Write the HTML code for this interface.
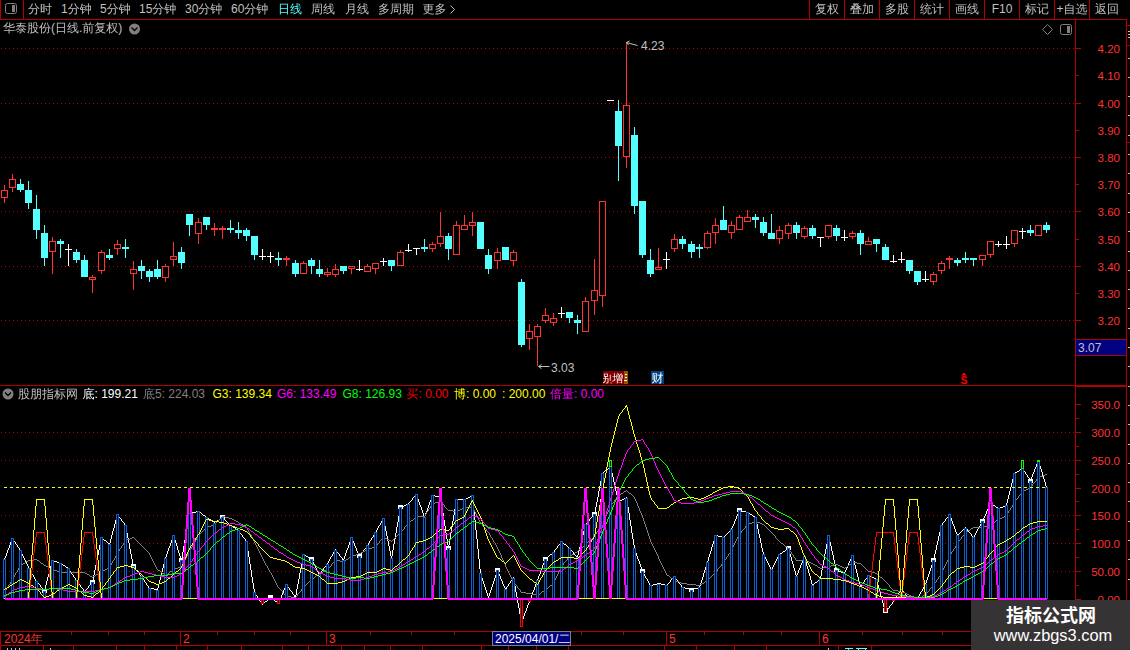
<!DOCTYPE html>
<html lang="zh-CN"><head><meta charset="utf-8"><title>华泰股份 日线</title>
<style>
html,body{margin:0;padding:0;background:#000;overflow:hidden}
svg{display:block}
text{font-family:"Liberation Sans","WenQuanYi Zen Hei","Noto Sans CJK SC",sans-serif;white-space:pre}
</style></head><body>
<svg width="1130" height="650" viewBox="0 0 1130 650">
<rect x="0" y="0" width="1130" height="650" fill="#000"/>
<g shape-rendering="crispEdges">
<line x1="1" y1="48.5" x2="1074" y2="48.5" stroke="#B40000" stroke-width="1" stroke-dasharray="1 3"/>
<line x1="1" y1="103.5" x2="1074" y2="103.5" stroke="#B40000" stroke-width="1" stroke-dasharray="1 3"/>
<line x1="1" y1="157.5" x2="1074" y2="157.5" stroke="#B40000" stroke-width="1" stroke-dasharray="1 3"/>
<line x1="1" y1="211.5" x2="1074" y2="211.5" stroke="#B40000" stroke-width="1" stroke-dasharray="1 3"/>
<line x1="1" y1="266.5" x2="1074" y2="266.5" stroke="#B40000" stroke-width="1" stroke-dasharray="1 3"/>
<line x1="1" y1="320.5" x2="1074" y2="320.5" stroke="#B40000" stroke-width="1" stroke-dasharray="1 3"/>
<line x1="1" y1="432.5" x2="1074" y2="432.5" stroke="#B40000" stroke-width="1" stroke-dasharray="1 3"/>
<line x1="1" y1="460.5" x2="1074" y2="460.5" stroke="#B40000" stroke-width="1" stroke-dasharray="1 3"/>
<line x1="1" y1="515.5" x2="1074" y2="515.5" stroke="#B40000" stroke-width="1" stroke-dasharray="1 3"/>
<line x1="1" y1="543.5" x2="1074" y2="543.5" stroke="#B40000" stroke-width="1" stroke-dasharray="1 3"/>
<line x1="1" y1="571.5" x2="1074" y2="571.5" stroke="#B40000" stroke-width="1" stroke-dasharray="1 3"/>
<rect x="0" y="19" width="1127" height="1" fill="#B40000" />
<rect x="0" y="0" width="1" height="20" fill="#B40000" />
<rect x="23" y="0" width="1" height="20" fill="#B40000" />
<rect x="809" y="0" width="1" height="20" fill="#B40000" />
<rect x="844" y="0" width="1" height="20" fill="#B40000" />
<rect x="879" y="0" width="1" height="20" fill="#B40000" />
<rect x="914" y="0" width="1" height="20" fill="#B40000" />
<rect x="949" y="0" width="1" height="20" fill="#B40000" />
<rect x="984" y="0" width="1" height="20" fill="#B40000" />
<rect x="1019" y="0" width="1" height="20" fill="#B40000" />
<rect x="1054" y="0" width="1" height="20" fill="#B40000" />
<rect x="1089" y="0" width="1" height="20" fill="#B40000" />
<rect x="1075" y="20" width="1" height="611" fill="#B40000" />
<rect x="1126" y="20" width="1" height="581" fill="#B40000" />
<rect x="0" y="385" width="1076" height="1" fill="#B40000" />
<rect x="1075" y="385" width="52" height="2" fill="#B40000" />
<rect x="1076" y="48" width="5" height="1" fill="#B40000" />
<rect x="1076" y="75" width="3" height="1" fill="#B40000" />
<rect x="1076" y="103" width="5" height="1" fill="#B40000" />
<rect x="1076" y="130" width="3" height="1" fill="#B40000" />
<rect x="1076" y="157" width="5" height="1" fill="#B40000" />
<rect x="1076" y="184" width="3" height="1" fill="#B40000" />
<rect x="1076" y="211" width="5" height="1" fill="#B40000" />
<rect x="1076" y="239" width="3" height="1" fill="#B40000" />
<rect x="1076" y="266" width="5" height="1" fill="#B40000" />
<rect x="1076" y="293" width="3" height="1" fill="#B40000" />
<rect x="1076" y="320" width="5" height="1" fill="#B40000" />
<rect x="1076" y="599" width="5" height="1" fill="#B40000" />
<rect x="1076" y="585" width="3" height="1" fill="#B40000" />
<rect x="1076" y="571" width="5" height="1" fill="#B40000" />
<rect x="1076" y="557" width="3" height="1" fill="#B40000" />
<rect x="1076" y="543" width="5" height="1" fill="#B40000" />
<rect x="1076" y="529" width="3" height="1" fill="#B40000" />
<rect x="1076" y="515" width="5" height="1" fill="#B40000" />
<rect x="1076" y="501" width="3" height="1" fill="#B40000" />
<rect x="1076" y="488" width="5" height="1" fill="#B40000" />
<rect x="1076" y="474" width="3" height="1" fill="#B40000" />
<rect x="1076" y="460" width="5" height="1" fill="#B40000" />
<rect x="1076" y="446" width="3" height="1" fill="#B40000" />
<rect x="1076" y="432" width="5" height="1" fill="#B40000" />
<rect x="1076" y="418" width="3" height="1" fill="#B40000" />
<rect x="1076" y="404" width="5" height="1" fill="#B40000" />
<rect x="1128" y="58" width="2" height="1" fill="#C0C0C0" />
<rect x="1128" y="77" width="2" height="1" fill="#C0C0C0" />
<rect x="1128" y="96" width="2" height="1" fill="#C0C0C0" />
<rect x="1128" y="115" width="2" height="1" fill="#C0C0C0" />
<rect x="1128" y="135" width="2" height="1" fill="#C0C0C0" />
<rect x="1128" y="154" width="2" height="1" fill="#C0C0C0" />
<rect x="1128" y="173" width="2" height="1" fill="#C0C0C0" />
<rect x="1128" y="193" width="2" height="1" fill="#C0C0C0" />
<rect x="1128" y="212" width="2" height="1" fill="#C0C0C0" />
<rect x="1128" y="231" width="2" height="1" fill="#C0C0C0" />
<rect x="1128" y="251" width="2" height="1" fill="#C0C0C0" />
<rect x="1128" y="270" width="2" height="1" fill="#C0C0C0" />
<rect x="1128" y="289" width="2" height="1" fill="#C0C0C0" />
<rect x="1128" y="308" width="2" height="1" fill="#C0C0C0" />
<rect x="1128" y="328" width="2" height="1" fill="#C0C0C0" />
<rect x="1128" y="347" width="2" height="1" fill="#C0C0C0" />
<rect x="1128" y="366" width="2" height="1" fill="#C0C0C0" />
<rect x="1128" y="386" width="2" height="1" fill="#C0C0C0" />
<rect x="1128" y="405" width="2" height="1" fill="#C0C0C0" />
<rect x="1128" y="424" width="2" height="1" fill="#C0C0C0" />
<rect x="1128" y="444" width="2" height="1" fill="#C0C0C0" />
<rect x="1128" y="463" width="2" height="1" fill="#C0C0C0" />
<rect x="1128" y="482" width="2" height="1" fill="#C0C0C0" />
<rect x="1128" y="501" width="2" height="1" fill="#C0C0C0" />
<rect x="1128" y="521" width="2" height="1" fill="#C0C0C0" />
<rect x="1128" y="540" width="2" height="1" fill="#C0C0C0" />
<rect x="1128" y="559" width="2" height="1" fill="#C0C0C0" />
<rect x="1128" y="579" width="2" height="1" fill="#C0C0C0" />
<rect x="1127" y="25" width="3" height="1" fill="#B40000" />
<rect x="1127" y="45" width="3" height="1" fill="#B40000" />
<rect x="1127" y="142" width="3" height="1" fill="#B40000" />
<rect x="1128" y="31" width="2" height="1" fill="#C0C0C0" />
<rect x="1128" y="34" width="2" height="1" fill="#C0C0C0" />
<rect x="1128" y="37" width="2" height="1" fill="#C0C0C0" />
<rect x="1076" y="340" width="50" height="15" fill="#000080" />
<rect x="1076" y="339" width="51" height="1" fill="#B40000" />
<rect x="1076" y="355" width="51" height="1" fill="#B40000" />
<rect x="0" y="631" width="1076" height="1" fill="#B40000" />
<rect x="0" y="645" width="971" height="1" fill="#B40000" />
<rect x="0" y="631" width="1" height="20" fill="#B40000" />
<rect x="180" y="631" width="1" height="15" fill="#B40000" />
<rect x="326" y="631" width="1" height="15" fill="#B40000" />
<rect x="492" y="631" width="1" height="15" fill="#B40000" />
<rect x="666" y="631" width="1" height="15" fill="#B40000" />
<rect x="819" y="631" width="1" height="15" fill="#B40000" />
<rect x="71" y="632" width="1" height="3" fill="#B40000" />
<rect x="108" y="632" width="1" height="3" fill="#B40000" />
<rect x="144" y="632" width="1" height="3" fill="#B40000" />
<rect x="217" y="632" width="1" height="3" fill="#B40000" />
<rect x="254" y="632" width="1" height="3" fill="#B40000" />
<rect x="290" y="632" width="1" height="3" fill="#B40000" />
<rect x="370" y="632" width="1" height="3" fill="#B40000" />
<rect x="411" y="632" width="1" height="3" fill="#B40000" />
<rect x="454" y="632" width="1" height="3" fill="#B40000" />
<rect x="581" y="632" width="1" height="3" fill="#B40000" />
<rect x="623" y="632" width="1" height="3" fill="#B40000" />
<rect x="704" y="632" width="1" height="3" fill="#B40000" />
<rect x="743" y="632" width="1" height="3" fill="#B40000" />
<rect x="781" y="632" width="1" height="3" fill="#B40000" />
<rect x="862" y="632" width="1" height="3" fill="#B40000" />
<rect x="902" y="632" width="1" height="3" fill="#B40000" />
<rect x="942" y="632" width="1" height="3" fill="#B40000" />
<rect x="43" y="646" width="1" height="4" fill="#B40000" />
<rect x="73" y="646" width="1" height="4" fill="#B40000" />
<rect x="116" y="646" width="1" height="4" fill="#B40000" />
<rect x="144" y="646" width="1" height="4" fill="#B40000" />
<rect x="176" y="646" width="1" height="4" fill="#B40000" />
<rect x="207" y="646" width="1" height="4" fill="#B40000" />
<rect x="241" y="646" width="1" height="4" fill="#B40000" />
<rect x="282" y="646" width="1" height="4" fill="#B40000" />
<rect x="308" y="646" width="1" height="4" fill="#B40000" />
<rect x="341" y="646" width="1" height="4" fill="#B40000" />
<rect x="364" y="646" width="1" height="4" fill="#B40000" />
<rect x="390" y="646" width="1" height="4" fill="#B40000" />
<rect x="422" y="646" width="1" height="4" fill="#B40000" />
<rect x="481" y="646" width="1" height="4" fill="#B40000" />
<rect x="508" y="646" width="1" height="4" fill="#B40000" />
<rect x="536" y="646" width="1" height="4" fill="#B40000" />
<rect x="568" y="646" width="1" height="4" fill="#B40000" />
<rect x="664" y="646" width="1" height="4" fill="#B40000" />
<rect x="696" y="646" width="1" height="4" fill="#B40000" />
<rect x="734" y="646" width="1" height="4" fill="#B40000" />
<rect x="766" y="646" width="1" height="4" fill="#B40000" />
<rect x="838" y="646" width="1" height="4" fill="#B40000" />
<rect x="871" y="646" width="1" height="4" fill="#B40000" />
<rect x="7" y="648" width="1" height="2" fill="#C0C0C0" />
<rect x="11" y="648" width="1" height="2" fill="#C0C0C0" />
<rect x="15" y="648" width="1" height="2" fill="#C0C0C0" />
<rect x="19" y="648" width="1" height="2" fill="#C0C0C0" />
<rect x="50" y="648" width="1" height="2" fill="#C0C0C0" />
<rect x="828" y="648" width="1" height="2" fill="#C0C0C0" />
<rect x="845" y="648" width="8" height="1" fill="#54FFFF" />
<rect x="856" y="648" width="11" height="1" fill="#54FFFF" />
<rect x="848" y="649" width="1" height="1" fill="#54FFFF" />
<rect x="858" y="649" width="1" height="1" fill="#54FFFF" />
<rect x="865" y="649" width="1" height="1" fill="#54FFFF" />
</g>
<g shape-rendering="crispEdges">
<rect x="4" y="185" width="1" height="6" fill="#FF3232" />
<rect x="4" y="198" width="1" height="5" fill="#FF3232" />
<rect x="1.5" y="190.5" width="6" height="7" fill="#000" stroke="#FF3232" stroke-width="1"/>
<rect x="12" y="174" width="1" height="6" fill="#FF3232" />
<rect x="12" y="188" width="1" height="4" fill="#FF3232" />
<rect x="9.5" y="179.5" width="6" height="8" fill="#000" stroke="#FF3232" stroke-width="1"/>
<rect x="20" y="179" width="1" height="6" fill="#54FFFF" />
<rect x="20" y="190" width="1" height="2" fill="#54FFFF" />
<rect x="17" y="184" width="7" height="6" fill="#54FFFF" />
<rect x="28" y="181" width="1" height="10" fill="#54FFFF" />
<rect x="28" y="203" width="1" height="6" fill="#54FFFF" />
<rect x="25" y="190" width="7" height="13" fill="#54FFFF" />
<rect x="36" y="195" width="1" height="15" fill="#54FFFF" />
<rect x="36" y="230" width="1" height="9" fill="#54FFFF" />
<rect x="33" y="209" width="7" height="21" fill="#54FFFF" />
<rect x="44" y="225" width="1" height="9" fill="#54FFFF" />
<rect x="44" y="258" width="1" height="8" fill="#54FFFF" />
<rect x="41" y="233" width="7" height="25" fill="#54FFFF" />
<rect x="52" y="237" width="1" height="5" fill="#FF3232" />
<rect x="52" y="252" width="1" height="22" fill="#FF3232" />
<rect x="49.5" y="241.5" width="6" height="10" fill="#000" stroke="#FF3232" stroke-width="1"/>
<rect x="60" y="239" width="1" height="3" fill="#54FFFF" />
<rect x="60" y="244" width="1" height="14" fill="#54FFFF" />
<rect x="57" y="241" width="7" height="3" fill="#54FFFF" />
<rect x="68" y="244" width="1" height="22" fill="#FFFFFF" />
<rect x="65" y="249" width="7" height="1" fill="#FFFFFF" />
<rect x="76" y="249" width="1" height="4" fill="#54FFFF" />
<rect x="76" y="260" width="1" height="3" fill="#54FFFF" />
<rect x="73" y="252" width="7" height="8" fill="#54FFFF" />
<rect x="84" y="255" width="1" height="6" fill="#54FFFF" />
<rect x="81" y="260" width="7" height="17" fill="#54FFFF" />
<rect x="92" y="275" width="1" height="3" fill="#FF3232" />
<rect x="92" y="280" width="1" height="13" fill="#FF3232" />
<rect x="89.5" y="277.5" width="6" height="2" fill="#000" stroke="#FF3232" stroke-width="1"/>
<rect x="101" y="250" width="1" height="3" fill="#FF3232" />
<rect x="101" y="271" width="1" height="3" fill="#FF3232" />
<rect x="98.5" y="252.5" width="6" height="18" fill="#000" stroke="#FF3232" stroke-width="1"/>
<rect x="109" y="249" width="1" height="7" fill="#54FFFF" />
<rect x="109" y="258" width="1" height="2" fill="#54FFFF" />
<rect x="106" y="255" width="7" height="3" fill="#54FFFF" />
<rect x="117" y="240" width="1" height="5" fill="#FF3232" />
<rect x="117" y="249" width="1" height="6" fill="#FF3232" />
<rect x="114.5" y="244.5" width="6" height="4" fill="#000" stroke="#FF3232" stroke-width="1"/>
<rect x="125" y="239" width="1" height="9" fill="#54FFFF" />
<rect x="125" y="249" width="1" height="9" fill="#54FFFF" />
<rect x="122" y="247" width="7" height="2" fill="#54FFFF" />
<rect x="133" y="261" width="1" height="9" fill="#FF3232" />
<rect x="133" y="274" width="1" height="16" fill="#FF3232" />
<rect x="130.5" y="269.5" width="6" height="4" fill="#000" stroke="#FF3232" stroke-width="1"/>
<rect x="141" y="260" width="1" height="7" fill="#54FFFF" />
<rect x="141" y="271" width="1" height="8" fill="#54FFFF" />
<rect x="138" y="266" width="7" height="5" fill="#54FFFF" />
<rect x="149" y="269" width="1" height="3" fill="#54FFFF" />
<rect x="149" y="277" width="1" height="5" fill="#54FFFF" />
<rect x="146" y="271" width="7" height="6" fill="#54FFFF" />
<rect x="157" y="260" width="1" height="10" fill="#54FFFF" />
<rect x="157" y="277" width="1" height="2" fill="#54FFFF" />
<rect x="154" y="269" width="7" height="8" fill="#54FFFF" />
<rect x="165" y="264" width="1" height="3" fill="#FF3232" />
<rect x="165" y="278" width="1" height="4" fill="#FF3232" />
<rect x="162.5" y="266.5" width="6" height="11" fill="#000" stroke="#FF3232" stroke-width="1"/>
<rect x="173" y="242" width="1" height="15" fill="#FF3232" />
<rect x="173" y="260" width="1" height="6" fill="#FF3232" />
<rect x="170.5" y="256.5" width="6" height="3" fill="#000" stroke="#FF3232" stroke-width="1"/>
<rect x="181" y="247" width="1" height="6" fill="#54FFFF" />
<rect x="181" y="263" width="1" height="6" fill="#54FFFF" />
<rect x="178" y="252" width="7" height="11" fill="#54FFFF" />
<rect x="189" y="225" width="1" height="11" fill="#54FFFF" />
<rect x="186" y="214" width="7" height="11" fill="#54FFFF" />
<rect x="198" y="218" width="1" height="5" fill="#FF3232" />
<rect x="198" y="234" width="1" height="10" fill="#FF3232" />
<rect x="195.5" y="222.5" width="6" height="11" fill="#000" stroke="#FF3232" stroke-width="1"/>
<rect x="206" y="225" width="1" height="5" fill="#54FFFF" />
<rect x="203" y="217" width="7" height="8" fill="#54FFFF" />
<rect x="214" y="223" width="1" height="6" fill="#FF3232" />
<rect x="214" y="230" width="1" height="6" fill="#FF3232" />
<rect x="211.5" y="228.5" width="6" height="1" fill="#000" stroke="#FF3232" stroke-width="1"/>
<rect x="222" y="226" width="1" height="3" fill="#FF3232" />
<rect x="222" y="230" width="1" height="9" fill="#FF3232" />
<rect x="219.5" y="228.5" width="6" height="1" fill="#000" stroke="#FF3232" stroke-width="1"/>
<rect x="230" y="220" width="1" height="9" fill="#54FFFF" />
<rect x="230" y="230" width="1" height="3" fill="#54FFFF" />
<rect x="227" y="228" width="7" height="2" fill="#54FFFF" />
<rect x="238" y="222" width="1" height="9" fill="#54FFFF" />
<rect x="238" y="233" width="1" height="6" fill="#54FFFF" />
<rect x="235" y="230" width="7" height="3" fill="#54FFFF" />
<rect x="246" y="228" width="1" height="3" fill="#54FFFF" />
<rect x="246" y="236" width="1" height="5" fill="#54FFFF" />
<rect x="243" y="230" width="7" height="6" fill="#54FFFF" />
<rect x="254" y="255" width="1" height="5" fill="#54FFFF" />
<rect x="251" y="236" width="7" height="19" fill="#54FFFF" />
<rect x="262" y="249" width="1" height="11" fill="#FFFFFF" />
<rect x="259" y="256" width="7" height="1" fill="#FFFFFF" />
<rect x="270" y="252" width="1" height="11" fill="#FFFFFF" />
<rect x="267" y="256" width="7" height="1" fill="#FFFFFF" />
<rect x="278" y="252" width="1" height="7" fill="#54FFFF" />
<rect x="278" y="260" width="1" height="6" fill="#54FFFF" />
<rect x="275" y="258" width="7" height="2" fill="#54FFFF" />
<rect x="286" y="256" width="1" height="3" fill="#FF3232" />
<rect x="286" y="260" width="1" height="6" fill="#FF3232" />
<rect x="283.5" y="258.5" width="6" height="1" fill="#000" stroke="#FF3232" stroke-width="1"/>
<rect x="295" y="260" width="1" height="4" fill="#54FFFF" />
<rect x="295" y="274" width="1" height="3" fill="#54FFFF" />
<rect x="292" y="263" width="7" height="11" fill="#54FFFF" />
<rect x="303" y="261" width="1" height="3" fill="#FF3232" />
<rect x="300.5" y="263.5" width="6" height="10" fill="#000" stroke="#FF3232" stroke-width="1"/>
<rect x="311" y="258" width="1" height="3" fill="#54FFFF" />
<rect x="311" y="266" width="1" height="8" fill="#54FFFF" />
<rect x="308" y="260" width="7" height="6" fill="#54FFFF" />
<rect x="319" y="260" width="1" height="10" fill="#54FFFF" />
<rect x="319" y="274" width="1" height="3" fill="#54FFFF" />
<rect x="316" y="269" width="7" height="5" fill="#54FFFF" />
<rect x="327" y="268" width="1" height="5" fill="#FF3232" />
<rect x="327" y="275" width="1" height="2" fill="#FF3232" />
<rect x="324.5" y="272.5" width="6" height="2" fill="#000" stroke="#FF3232" stroke-width="1"/>
<rect x="335" y="264" width="1" height="6" fill="#FF3232" />
<rect x="335" y="275" width="1" height="2" fill="#FF3232" />
<rect x="332.5" y="269.5" width="6" height="5" fill="#000" stroke="#FF3232" stroke-width="1"/>
<rect x="343" y="271" width="1" height="3" fill="#54FFFF" />
<rect x="340" y="266" width="7" height="5" fill="#54FFFF" />
<rect x="351" y="269" width="1" height="5" fill="#FF3232" />
<rect x="348.5" y="266.5" width="6" height="2" fill="#000" stroke="#FF3232" stroke-width="1"/>
<rect x="359" y="260" width="1" height="11" fill="#FFFFFF" />
<rect x="356" y="269" width="7" height="1" fill="#FFFFFF" />
<rect x="367" y="264" width="1" height="3" fill="#FF3232" />
<rect x="364.5" y="266.5" width="6" height="5" fill="#000" stroke="#FF3232" stroke-width="1"/>
<rect x="375" y="269" width="1" height="5" fill="#FF3232" />
<rect x="372.5" y="263.5" width="6" height="5" fill="#000" stroke="#FF3232" stroke-width="1"/>
<rect x="383" y="258" width="1" height="8" fill="#FFFFFF" />
<rect x="380" y="261" width="7" height="1" fill="#FFFFFF" />
<rect x="391" y="266" width="1" height="5" fill="#54FFFF" />
<rect x="388" y="260" width="7" height="6" fill="#54FFFF" />
<rect x="400" y="250" width="1" height="3" fill="#FF3232" />
<rect x="397.5" y="252.5" width="6" height="13" fill="#000" stroke="#FF3232" stroke-width="1"/>
<rect x="408" y="244" width="1" height="8" fill="#FFFFFF" />
<rect x="405" y="250" width="7" height="1" fill="#FFFFFF" />
<rect x="416" y="248" width="1" height="7" fill="#FFFFFF" />
<rect x="413" y="248" width="7" height="1" fill="#FFFFFF" />
<rect x="424" y="239" width="1" height="9" fill="#54FFFF" />
<rect x="424" y="249" width="1" height="3" fill="#54FFFF" />
<rect x="421" y="247" width="7" height="2" fill="#54FFFF" />
<rect x="432" y="242" width="1" height="3" fill="#FF3232" />
<rect x="432" y="249" width="1" height="3" fill="#FF3232" />
<rect x="429.5" y="244.5" width="6" height="4" fill="#000" stroke="#FF3232" stroke-width="1"/>
<rect x="440" y="212" width="1" height="25" fill="#FF3232" />
<rect x="440" y="244" width="1" height="3" fill="#FF3232" />
<rect x="437.5" y="236.5" width="6" height="7" fill="#000" stroke="#FF3232" stroke-width="1"/>
<rect x="448" y="233" width="1" height="4" fill="#54FFFF" />
<rect x="448" y="249" width="1" height="11" fill="#54FFFF" />
<rect x="445" y="236" width="7" height="13" fill="#54FFFF" />
<rect x="456" y="221" width="1" height="5" fill="#FF3232" />
<rect x="453.5" y="225.5" width="6" height="29" fill="#000" stroke="#FF3232" stroke-width="1"/>
<rect x="464" y="215" width="1" height="11" fill="#FF3232" />
<rect x="461.5" y="225.5" width="6" height="4" fill="#000" stroke="#FF3232" stroke-width="1"/>
<rect x="472" y="212" width="1" height="11" fill="#FF3232" />
<rect x="472" y="226" width="1" height="10" fill="#FF3232" />
<rect x="469.5" y="222.5" width="6" height="3" fill="#000" stroke="#FF3232" stroke-width="1"/>
<rect x="477" y="222" width="7" height="27" fill="#54FFFF" />
<rect x="488" y="249" width="1" height="7" fill="#54FFFF" />
<rect x="488" y="269" width="1" height="5" fill="#54FFFF" />
<rect x="485" y="255" width="7" height="14" fill="#54FFFF" />
<rect x="497" y="248" width="1" height="5" fill="#FF3232" />
<rect x="497" y="261" width="1" height="8" fill="#FF3232" />
<rect x="494.5" y="252.5" width="6" height="8" fill="#000" stroke="#FF3232" stroke-width="1"/>
<rect x="502" y="247" width="7" height="13" fill="#54FFFF" />
<rect x="513" y="250" width="1" height="3" fill="#FF3232" />
<rect x="513" y="261" width="1" height="5" fill="#FF3232" />
<rect x="510.5" y="252.5" width="6" height="8" fill="#000" stroke="#FF3232" stroke-width="1"/>
<rect x="521" y="279" width="1" height="4" fill="#54FFFF" />
<rect x="521" y="345" width="1" height="2" fill="#54FFFF" />
<rect x="518" y="282" width="7" height="63" fill="#54FFFF" />
<rect x="529" y="324" width="1" height="8" fill="#FF3232" />
<rect x="529" y="339" width="1" height="11" fill="#FF3232" />
<rect x="526.5" y="331.5" width="6" height="7" fill="#000" stroke="#FF3232" stroke-width="1"/>
<rect x="537" y="324" width="1" height="3" fill="#FF3232" />
<rect x="537" y="337" width="1" height="29" fill="#FF3232" />
<rect x="534.5" y="326.5" width="6" height="10" fill="#000" stroke="#FF3232" stroke-width="1"/>
<rect x="545" y="308" width="1" height="8" fill="#FF3232" />
<rect x="545" y="321" width="1" height="2" fill="#FF3232" />
<rect x="542.5" y="315.5" width="6" height="5" fill="#000" stroke="#FF3232" stroke-width="1"/>
<rect x="553" y="313" width="1" height="6" fill="#FF3232" />
<rect x="553" y="323" width="1" height="3" fill="#FF3232" />
<rect x="550.5" y="318.5" width="6" height="4" fill="#000" stroke="#FF3232" stroke-width="1"/>
<rect x="561" y="307" width="1" height="11" fill="#FFFFFF" />
<rect x="558" y="313" width="7" height="1" fill="#FFFFFF" />
<rect x="569" y="318" width="1" height="5" fill="#54FFFF" />
<rect x="566" y="312" width="7" height="6" fill="#54FFFF" />
<rect x="577" y="315" width="1" height="6" fill="#54FFFF" />
<rect x="577" y="323" width="1" height="11" fill="#54FFFF" />
<rect x="574" y="320" width="7" height="3" fill="#54FFFF" />
<rect x="585" y="297" width="1" height="5" fill="#FF3232" />
<rect x="582.5" y="301.5" width="6" height="30" fill="#000" stroke="#FF3232" stroke-width="1"/>
<rect x="594" y="259" width="1" height="32" fill="#FF3232" />
<rect x="594" y="301" width="1" height="14" fill="#FF3232" />
<rect x="591.5" y="290.5" width="6" height="10" fill="#000" stroke="#FF3232" stroke-width="1"/>
<rect x="602" y="296" width="1" height="11" fill="#FF3232" />
<rect x="599.5" y="201.5" width="6" height="94" fill="#000" stroke="#FF3232" stroke-width="1"/>
<rect x="607" y="100" width="7" height="1" fill="#FFFFFF" />
<rect x="618" y="100" width="1" height="12" fill="#54FFFF" />
<rect x="618" y="146" width="1" height="35" fill="#54FFFF" />
<rect x="615" y="111" width="7" height="35" fill="#54FFFF" />
<rect x="626" y="42" width="1" height="64" fill="#FF3232" />
<rect x="626" y="157" width="1" height="11" fill="#FF3232" />
<rect x="623.5" y="105.5" width="6" height="51" fill="#000" stroke="#FF3232" stroke-width="1"/>
<rect x="634" y="127" width="1" height="9" fill="#54FFFF" />
<rect x="634" y="206" width="1" height="8" fill="#54FFFF" />
<rect x="631" y="135" width="7" height="71" fill="#54FFFF" />
<rect x="642" y="255" width="1" height="3" fill="#54FFFF" />
<rect x="639" y="201" width="7" height="54" fill="#54FFFF" />
<rect x="650" y="249" width="1" height="12" fill="#54FFFF" />
<rect x="650" y="274" width="1" height="3" fill="#54FFFF" />
<rect x="647" y="260" width="7" height="14" fill="#54FFFF" />
<rect x="658" y="248" width="1" height="20" fill="#FF3232" />
<rect x="655.5" y="267.5" width="6" height="2" fill="#000" stroke="#FF3232" stroke-width="1"/>
<rect x="666" y="252" width="1" height="17" fill="#FFFFFF" />
<rect x="663" y="259" width="7" height="1" fill="#FFFFFF" />
<rect x="674" y="234" width="1" height="6" fill="#FF3232" />
<rect x="674" y="249" width="1" height="3" fill="#FF3232" />
<rect x="671.5" y="239.5" width="6" height="9" fill="#000" stroke="#FF3232" stroke-width="1"/>
<rect x="682" y="236" width="1" height="4" fill="#54FFFF" />
<rect x="682" y="244" width="1" height="5" fill="#54FFFF" />
<rect x="679" y="239" width="7" height="5" fill="#54FFFF" />
<rect x="691" y="241" width="1" height="4" fill="#54FFFF" />
<rect x="691" y="252" width="1" height="6" fill="#54FFFF" />
<rect x="688" y="244" width="7" height="8" fill="#54FFFF" />
<rect x="699" y="244" width="1" height="4" fill="#54FFFF" />
<rect x="699" y="249" width="1" height="9" fill="#54FFFF" />
<rect x="696" y="247" width="7" height="2" fill="#54FFFF" />
<rect x="707" y="231" width="1" height="3" fill="#FF3232" />
<rect x="707" y="248" width="1" height="1" fill="#FF3232" />
<rect x="704.5" y="233.5" width="6" height="14" fill="#000" stroke="#FF3232" stroke-width="1"/>
<rect x="715" y="218" width="1" height="8" fill="#FF3232" />
<rect x="715" y="233" width="1" height="11" fill="#FF3232" />
<rect x="712.5" y="225.5" width="6" height="7" fill="#000" stroke="#FF3232" stroke-width="1"/>
<rect x="723" y="206" width="1" height="15" fill="#54FFFF" />
<rect x="720" y="220" width="7" height="10" fill="#54FFFF" />
<rect x="731" y="221" width="1" height="5" fill="#FF3232" />
<rect x="731" y="233" width="1" height="6" fill="#FF3232" />
<rect x="728.5" y="225.5" width="6" height="7" fill="#000" stroke="#FF3232" stroke-width="1"/>
<rect x="739" y="215" width="1" height="3" fill="#FF3232" />
<rect x="736.5" y="217.5" width="6" height="12" fill="#000" stroke="#FF3232" stroke-width="1"/>
<rect x="747" y="210" width="1" height="8" fill="#FF3232" />
<rect x="744.5" y="217.5" width="6" height="4" fill="#000" stroke="#FF3232" stroke-width="1"/>
<rect x="755" y="214" width="1" height="4" fill="#54FFFF" />
<rect x="755" y="220" width="1" height="8" fill="#54FFFF" />
<rect x="752" y="217" width="7" height="3" fill="#54FFFF" />
<rect x="763" y="217" width="1" height="6" fill="#54FFFF" />
<rect x="763" y="233" width="1" height="3" fill="#54FFFF" />
<rect x="760" y="222" width="7" height="11" fill="#54FFFF" />
<rect x="771" y="214" width="1" height="20" fill="#54FFFF" />
<rect x="768" y="233" width="7" height="6" fill="#54FFFF" />
<rect x="779" y="226" width="1" height="5" fill="#FF3232" />
<rect x="779" y="239" width="1" height="5" fill="#FF3232" />
<rect x="776.5" y="230.5" width="6" height="8" fill="#000" stroke="#FF3232" stroke-width="1"/>
<rect x="788" y="223" width="1" height="3" fill="#FF3232" />
<rect x="788" y="234" width="1" height="5" fill="#FF3232" />
<rect x="785.5" y="225.5" width="6" height="8" fill="#000" stroke="#FF3232" stroke-width="1"/>
<rect x="796" y="222" width="1" height="4" fill="#54FFFF" />
<rect x="796" y="233" width="1" height="6" fill="#54FFFF" />
<rect x="793" y="225" width="7" height="8" fill="#54FFFF" />
<rect x="804" y="226" width="1" height="3" fill="#FF3232" />
<rect x="804" y="237" width="1" height="2" fill="#FF3232" />
<rect x="801.5" y="228.5" width="6" height="8" fill="#000" stroke="#FF3232" stroke-width="1"/>
<rect x="812" y="225" width="1" height="4" fill="#54FFFF" />
<rect x="812" y="236" width="1" height="3" fill="#54FFFF" />
<rect x="809" y="228" width="7" height="8" fill="#54FFFF" />
<rect x="820" y="237" width="1" height="10" fill="#FFFFFF" />
<rect x="817" y="237" width="7" height="1" fill="#FFFFFF" />
<rect x="828" y="237" width="1" height="2" fill="#FF3232" />
<rect x="825.5" y="225.5" width="6" height="11" fill="#000" stroke="#FF3232" stroke-width="1"/>
<rect x="836" y="225" width="1" height="4" fill="#54FFFF" />
<rect x="836" y="236" width="1" height="5" fill="#54FFFF" />
<rect x="833" y="228" width="7" height="8" fill="#54FFFF" />
<rect x="844" y="230" width="1" height="11" fill="#FFFFFF" />
<rect x="841" y="237" width="7" height="1" fill="#FFFFFF" />
<rect x="852" y="231" width="1" height="3" fill="#FF3232" />
<rect x="852" y="237" width="1" height="2" fill="#FF3232" />
<rect x="849.5" y="233.5" width="6" height="3" fill="#000" stroke="#FF3232" stroke-width="1"/>
<rect x="860" y="230" width="1" height="4" fill="#54FFFF" />
<rect x="860" y="244" width="1" height="11" fill="#54FFFF" />
<rect x="857" y="233" width="7" height="11" fill="#54FFFF" />
<rect x="868" y="237" width="1" height="5" fill="#FF3232" />
<rect x="865.5" y="241.5" width="6" height="3" fill="#000" stroke="#FF3232" stroke-width="1"/>
<rect x="876" y="244" width="1" height="8" fill="#54FFFF" />
<rect x="873" y="239" width="7" height="5" fill="#54FFFF" />
<rect x="885" y="244" width="1" height="4" fill="#54FFFF" />
<rect x="882" y="247" width="7" height="13" fill="#54FFFF" />
<rect x="893" y="255" width="1" height="8" fill="#FFFFFF" />
<rect x="890" y="261" width="7" height="1" fill="#FFFFFF" />
<rect x="901" y="252" width="1" height="11" fill="#FFFFFF" />
<rect x="898" y="259" width="7" height="1" fill="#FFFFFF" />
<rect x="909" y="271" width="1" height="3" fill="#54FFFF" />
<rect x="906" y="260" width="7" height="11" fill="#54FFFF" />
<rect x="917" y="282" width="1" height="3" fill="#54FFFF" />
<rect x="914" y="271" width="7" height="11" fill="#54FFFF" />
<rect x="925" y="271" width="1" height="11" fill="#FFFFFF" />
<rect x="922" y="279" width="7" height="1" fill="#FFFFFF" />
<rect x="933" y="272" width="1" height="3" fill="#FF3232" />
<rect x="933" y="282" width="1" height="3" fill="#FF3232" />
<rect x="930.5" y="274.5" width="6" height="7" fill="#000" stroke="#FF3232" stroke-width="1"/>
<rect x="941" y="261" width="1" height="3" fill="#FF3232" />
<rect x="941" y="271" width="1" height="3" fill="#FF3232" />
<rect x="938.5" y="263.5" width="6" height="7" fill="#000" stroke="#FF3232" stroke-width="1"/>
<rect x="949" y="256" width="1" height="3" fill="#FF3232" />
<rect x="949" y="260" width="1" height="9" fill="#FF3232" />
<rect x="946.5" y="258.5" width="6" height="1" fill="#000" stroke="#FF3232" stroke-width="1"/>
<rect x="957" y="258" width="1" height="3" fill="#54FFFF" />
<rect x="957" y="263" width="1" height="3" fill="#54FFFF" />
<rect x="954" y="260" width="7" height="3" fill="#54FFFF" />
<rect x="965" y="252" width="1" height="7" fill="#54FFFF" />
<rect x="965" y="260" width="1" height="3" fill="#54FFFF" />
<rect x="962" y="258" width="7" height="2" fill="#54FFFF" />
<rect x="973" y="260" width="1" height="6" fill="#54FFFF" />
<rect x="970" y="258" width="7" height="2" fill="#54FFFF" />
<rect x="982" y="260" width="1" height="6" fill="#FF3232" />
<rect x="979.5" y="255.5" width="6" height="4" fill="#000" stroke="#FF3232" stroke-width="1"/>
<rect x="990" y="255" width="1" height="3" fill="#FF3232" />
<rect x="987.5" y="241.5" width="6" height="13" fill="#000" stroke="#FF3232" stroke-width="1"/>
<rect x="998" y="241" width="1" height="6" fill="#FFFFFF" />
<rect x="995" y="244" width="7" height="1" fill="#FFFFFF" />
<rect x="1006" y="236" width="1" height="13" fill="#FFFFFF" />
<rect x="1003" y="244" width="7" height="1" fill="#FFFFFF" />
<rect x="1014" y="244" width="1" height="3" fill="#FF3232" />
<rect x="1011.5" y="230.5" width="6" height="13" fill="#000" stroke="#FF3232" stroke-width="1"/>
<rect x="1022" y="228" width="1" height="11" fill="#FFFFFF" />
<rect x="1019" y="231" width="7" height="1" fill="#FFFFFF" />
<rect x="1030" y="225" width="1" height="6" fill="#54FFFF" />
<rect x="1030" y="233" width="1" height="3" fill="#54FFFF" />
<rect x="1027" y="230" width="7" height="3" fill="#54FFFF" />
<rect x="1035.5" y="225.5" width="6" height="10" fill="#000" stroke="#FF3232" stroke-width="1"/>
<rect x="1046" y="222" width="1" height="4" fill="#54FFFF" />
<rect x="1046" y="230" width="1" height="3" fill="#54FFFF" />
<rect x="1043" y="225" width="7" height="5" fill="#54FFFF" />
</g>
<path d="M4.5 558v2M5.5 556v2M6.5 553v3M7.5 550v3M8.5 548v2M9.5 545v3M10.5 542v3M11.5 540v2M12.5 538v2M13.5 539v2M14.5 541v1M15.5 542v2M16.5 544v1M17.5 545v2M18.5 547v1M19.5 548v2M20.5 550v1M20.5 551v1M21.5 552v2M22.5 554v2M23.5 556v2M24.5 558v2M25.5 560v2M26.5 562v2M27.5 564v2M28.5 566v2M29.5 568v2M30.5 570v2M31.5 572v2M32.5 574v1M33.5 575v2M34.5 577v2M35.5 579v2M36.5 581v1M37.5 582v1M38.5 583v1M39.5 584v1M40.5 585v2M41.5 587v1M42.5 588v1M43.5 589v1M44.5 590v1M44.5 589v1M45.5 585v4M46.5 581v4M47.5 577v4M48.5 574v3M49.5 570v4M50.5 566v4M51.5 562v4M52.5 560v2M53 560.5h1M54 561.5h3M57 562.5h2M59 563.5h2M61 564.5h2M63 565.5h2M65 566.5h1M66 567.5h2M68 568.5h1M69.5 569v2M70.5 571v1M71.5 572v2M72.5 574v1M73.5 575v2M74.5 577v1M75.5 578v2M76.5 580v1M77.5 581v2M78.5 583v1M79.5 584v1M80.5 585v2M81.5 587v1M82.5 588v1M83.5 589v2M84.5 591v1M85.5 590v1M86.5 589v1M87.5 588v1M88.5 586v2M89.5 585v1M90.5 584v1M91.5 583v1M92.5 582v1M92.5 580v2M93.5 575v5M94.5 570v5M95.5 565v5M96.5 560v5M97.5 555v5M98.5 550v5M99.5 545v5M100.5 540v5M101.5 537v3M102 538.5h1M103 539.5h1M104 540.5h2M106 541.5h1M107 542.5h1M108 543.5h1M109 544.5h1M109.5 543v1M110.5 539v4M111.5 535v4M112.5 531v4M113.5 528v3M114.5 524v4M115.5 520v4M116.5 516v4M117.5 514v2M118.5 515v2M119.5 517v1M120.5 518v1M121.5 519v2M122.5 521v1M123.5 522v1M124.5 523v2M125.5 525v1M125.5 526v2M126.5 528v5M127.5 533v5M128.5 538v5M129.5 543v6M130.5 549v5M131.5 554v5M132.5 559v5M133.5 564v3M134.5 567v1M135.5 568v2M136.5 570v1M137.5 571v1M138.5 572v1M139.5 573v2M140.5 575v1M141.5 576v1M142.5 577v2M143.5 579v1M144.5 580v2M145.5 582v1M146.5 583v2M147.5 585v1M148.5 586v2M149.5 588v1M150 588.5h4M154 589.5h4M157.5 588v1M158.5 584v4M159.5 580v4M160.5 576v4M161.5 572v4M162.5 568v4M163.5 564v4M164.5 560v4M165.5 558v2M165.5 557v1M166.5 554v3M167.5 551v3M168.5 548v3M169.5 546v2M170.5 543v3M171.5 540v3M172.5 537v3M173.5 535v2M173.5 536v1M174.5 537v3M175.5 540v3M176.5 543v3M177.5 546v4M178.5 550v3M179.5 553v3M180.5 556v3M181.5 559v2M181.5 558v2M182.5 552v6M183.5 546v6M184.5 540v6M185.5 534v6M186.5 528v6M187.5 522v6M188.5 516v6M189.5 513v3M190 513.5h2M192 512.5h4M196 511.5h3M199 512.5h2M201 513.5h1M202 514.5h1M203 515.5h2M205 516.5h1M206 517.5h1M207 518.5h2M209 519.5h2M211 520.5h1M212 521.5h2M214 522.5h1M215 521.5h2M217 520.5h2M219 519.5h1M220 518.5h2M222 517.5h1M223 518.5h1M224 519.5h1M225 520.5h1M226 521.5h1M227 522.5h1M228 523.5h1M229 524.5h1M230 525.5h1M231 526.5h2M233 527.5h2M235 528.5h1M236 529.5h2M238 530.5h1M239.5 531v2M240.5 533v1M241.5 534v1M242.5 535v2M243.5 537v1M244.5 538v1M245.5 539v2M246.5 541v1M246.5 542v3M247.5 545v6M248.5 551v6M249.5 557v7M250.5 564v6M251.5 570v7M252.5 577v6M253.5 583v6M254.5 589v4M255.5 593v2M256.5 595v1M257.5 596v2M258.5 598v1M259.5 599v2M260.5 601v1M261.5 602v2M262.5 604v1M263 603.5h1M264 602.5h1M265 601.5h2M267 600.5h1M268 599.5h1M269 598.5h1M270 597.5h1M271 598.5h2M273 599.5h1M274 600.5h1M275 601.5h2M277 602.5h1M278 603.5h1M278.5 602v1M279.5 600v2M280.5 598v2M281.5 595v3M282.5 593v2M283.5 590v3M284.5 588v2M285.5 586v2M286.5 584v2M287.5 585v2M288.5 587v1M289.5 588v2M290.5 590v1M291.5 591v1M292.5 592v2M293.5 594v1M294.5 595v2M295.5 597v1M295.5 595v2M296.5 589v6M297.5 584v5M298.5 579v5M299.5 573v6M300.5 568v5M301.5 563v5M302.5 557v6M303.5 554v3M304 555.5h2M306 556.5h2M308 557.5h1M309 558.5h2M311 559.5h1M312.5 560v2M313.5 562v2M314.5 564v2M315.5 566v2M316.5 568v2M317.5 570v2M318.5 572v2M319.5 574v1M320.5 572v2M321.5 571v1M322.5 570v1M323.5 568v2M324.5 567v1M325.5 566v1M326.5 564v2M327.5 563v1M328.5 561v2M329.5 559v2M330.5 557v2M331.5 556v1M332.5 554v2M333.5 552v2M334.5 550v2M335.5 549v1M336.5 550v2M337.5 552v1M338.5 553v1M339.5 554v2M340.5 556v1M341.5 557v1M342.5 558v2M343.5 560v1M343.5 559v1M344.5 556v3M345.5 553v3M346.5 550v3M347.5 548v2M348.5 545v3M349.5 542v3M350.5 539v3M351.5 537v2M351.5 538v1M352.5 539v2M353.5 541v2M354.5 543v3M355.5 546v2M356.5 548v3M357.5 551v2M358.5 553v2M359.5 555v2M360.5 554v2M361.5 553v1M362.5 552v1M363.5 550v2M364.5 549v1M365.5 548v1M366.5 546v2M367.5 545v1M368.5 543v2M369.5 541v2M370.5 540v1M371.5 538v2M372.5 537v1M373.5 535v2M374.5 533v2M375.5 532v1M376.5 530v2M377.5 528v2M378.5 526v2M379.5 525v1M380.5 523v2M381.5 521v2M382.5 519v2M383.5 518v1M383.5 519v2M384.5 521v5M385.5 526v5M386.5 531v5M387.5 536v5M388.5 541v5M389.5 546v5M390.5 551v5M391.5 556v3M391.5 556v2M392.5 550v6M393.5 544v6M394.5 539v5M395.5 533v6M396.5 527v6M397.5 522v5M398.5 516v6M399.5 510v6M400.5 507v3M401 507.5h1M402 506.5h2M404 505.5h2M406 504.5h2M408 503.5h1M409.5 502v1M410.5 501v1M411.5 500v1M412.5 498v2M413.5 497v1M414.5 496v1M415.5 495v1M416.5 494v1M416.5 495v1M417.5 496v3M418.5 499v3M419.5 502v3M420.5 505v2M421.5 507v3M422.5 510v3M423.5 513v3M424.5 516v2M424.5 516v1M425.5 513v3M426.5 511v2M427.5 508v3M428.5 505v3M429.5 502v3M430.5 500v2M431.5 497v3M432.5 495v2M433 495.5h2M435 496.5h4M439 497.5h2M440.5 498v3M441.5 501v6M442.5 507v6M443.5 513v7M444.5 520v6M445.5 526v7M446.5 533v6M447.5 539v6M448.5 545v4M448.5 545v3M449.5 539v6M450.5 533v6M451.5 527v6M452.5 521v6M453.5 515v6M454.5 509v6M455.5 503v6M456.5 499v4M457 499.5h8M465 499.5h1M466 498.5h2M468 497.5h2M470 496.5h2M472 495.5h1M472.5 496v4M473.5 500v10M474.5 510v10M475.5 520v10M476.5 530v9M477.5 539v10M478.5 549v10M479.5 559v10M480.5 569v5M480.5 574v1M481.5 575v3M482.5 578v3M483.5 581v3M484.5 584v3M485.5 587v3M486.5 590v3M487.5 593v3M488.5 596v2M488.5 596v1M489.5 593v3M490.5 590v3M491.5 587v3M492.5 584v3M493.5 581v3M494.5 578v3M495.5 575v3M496.5 572v3M497.5 570v2M497.5 571v1M498.5 572v2M499.5 574v2M500.5 576v3M501.5 579v2M502.5 581v3M503.5 584v2M504.5 586v2M505.5 588v2M506.5 587v2M507.5 586v1M508.5 584v2M509.5 583v1M510.5 581v2M511.5 580v1M512.5 578v2M513.5 577v1M513.5 578v2M514.5 580v6M515.5 586v6M516.5 592v5M517.5 597v6M518.5 603v5M519.5 608v6M520.5 614v6M521.5 620v3M521.5 621v1M522.5 619v2M523.5 616v3M524.5 613v3M525.5 611v2M526.5 608v3M527.5 605v3M528.5 603v2M529.5 601v2M529.5 600v1M530.5 598v2M531.5 595v3M532.5 592v3M533.5 590v2M534.5 587v3M535.5 584v3M536.5 582v2M537.5 580v2M537.5 579v1M538.5 576v3M539.5 574v2M540.5 571v3M541.5 568v3M542.5 565v3M543.5 563v2M544.5 560v3M545.5 558v2M546 557.5h2M548 556.5h1M549 555.5h1M550 554.5h2M552 553.5h1M553 552.5h1M554.5 550v2M555.5 549v1M556.5 548v1M557.5 546v2M558.5 545v1M559.5 544v1M560.5 542v2M561.5 541v1M562 542.5h1M563 543.5h1M564 544.5h2M566 545.5h1M567 546.5h1M568 547.5h1M569 548.5h1M570.5 549v1M571.5 550v1M572.5 551v1M573.5 552v2M574.5 554v1M575.5 555v1M576.5 556v1M577.5 557v1M577.5 555v2M578.5 551v4M579.5 547v4M580.5 543v4M581.5 539v4M582.5 535v4M583.5 531v4M584.5 527v4M585.5 524v3M586.5 523v1M587.5 522v1M588.5 521v1M589.5 519v2M590.5 518v1M591.5 517v1M592.5 516v1M593.5 515v1M594.5 514v1M594.5 512v2M595.5 507v5M596.5 502v5M597.5 497v5M598.5 491v6M599.5 486v5M600.5 481v5M601.5 476v5M602.5 473v3M603 472.5h1M604 471.5h1M605 470.5h2M607 469.5h1M608 468.5h1M609 467.5h1M610 466.5h1M610.5 467v2M611.5 469v4M612.5 473v4M613.5 477v5M614.5 482v4M615.5 486v5M616.5 491v4M617.5 495v4M618.5 499v3M619 501.5h1M620 500.5h2M622 499.5h2M624 498.5h2M626 497.5h1M626.5 498v3M627.5 501v6M628.5 507v6M629.5 513v7M630.5 520v6M631.5 526v7M632.5 533v6M633.5 539v6M634.5 545v4M634.5 549v1M635.5 550v3M636.5 553v3M637.5 556v3M638.5 559v2M639.5 561v3M640.5 564v3M641.5 567v3M642.5 570v2M643.5 572v2M644.5 574v2M645.5 576v2M646.5 578v1M647.5 579v2M648.5 581v2M649.5 583v2M650.5 585v1M651 585.5h2M653 584.5h4M657 583.5h2M659 583.5h2M661 584.5h4M665 585.5h2M667.5 584v1M668.5 583v1M669.5 582v1M670.5 580v2M671.5 579v1M672.5 578v1M673.5 577v1M674.5 576v1M675.5 577v2M676.5 579v1M677.5 580v1M678.5 581v2M679.5 583v1M680.5 584v1M681.5 585v2M682.5 587v1M683 587.5h2M685 588.5h4M689 589.5h3M692 589.5h2M694 588.5h4M698 587.5h2M699.5 586v1M700.5 583v3M701.5 580v3M702.5 577v3M703.5 573v4M704.5 570v3M705.5 567v3M706.5 564v3M707.5 562v2M707.5 561v1M708.5 557v4M709.5 554v3M710.5 551v3M711.5 547v4M712.5 544v3M713.5 541v3M714.5 537v4M715.5 535v2M716 535.5h2M718 536.5h4M722 537.5h2M724 536.5h1M725 535.5h1M726 534.5h1M727 533.5h1M728 532.5h1M729 531.5h1M730 530.5h1M731 529.5h1M731.5 528v1M732.5 526v2M733.5 524v2M734.5 521v3M735.5 519v2M736.5 516v3M737.5 514v2M738.5 512v2M739.5 510v2M740 510.5h2M742 511.5h4M746 512.5h2M748 513.5h2M750 514.5h2M752 515.5h1M753 516.5h2M755 517.5h1M755.5 518v2M756.5 520v4M757.5 524v5M758.5 529v5M759.5 534v4M760.5 538v5M761.5 543v5M762.5 548v4M763.5 552v3M764.5 555v2M765.5 557v2M766.5 559v2M767.5 561v2M768.5 563v2M769.5 565v2M770.5 567v2M771.5 569v1M772.5 567v2M773.5 565v2M774.5 563v2M775.5 561v2M776.5 559v2M777.5 557v2M778.5 555v2M779.5 554v1M780 553.5h2M782 552.5h1M783 551.5h2M785 550.5h1M786 549.5h2M788 548.5h1M788.5 549v1M789.5 550v4M790.5 554v3M791.5 557v4M792.5 561v3M793.5 564v4M794.5 568v3M795.5 571v4M796.5 575v2M796.5 575v1M797.5 573v2M798.5 570v3M799.5 568v2M800.5 565v3M801.5 563v2M802.5 560v3M803.5 558v2M804.5 556v2M804.5 557v1M805.5 558v4M806.5 562v4M807.5 566v3M808.5 569v4M809.5 573v3M810.5 576v4M811.5 580v4M812.5 584v2M813 584.5h1M814 583.5h1M815 582.5h2M817 581.5h1M818 580.5h1M819 579.5h1M820 578.5h1M820.5 576v2M821.5 570v6M822.5 565v5M823.5 560v5M824.5 554v6M825.5 549v5M826.5 544v5M827.5 538v6M828.5 535v3M828.5 536v2M829.5 538v4M830.5 542v4M831.5 546v5M832.5 551v4M833.5 555v5M834.5 560v4M835.5 564v4M836.5 568v3M837 570.5h1M838 571.5h3M841 572.5h2M843 573.5h2M844.5 572v1M845.5 570v2M846.5 568v2M847.5 566v2M848.5 563v3M849.5 561v2M850.5 559v2M851.5 557v2M852.5 555v2M852.5 556v1M853.5 557v4M854.5 561v4M855.5 565v4M856.5 569v4M857.5 573v4M858.5 577v4M859.5 581v4M860.5 585v2M861.5 584v2M862.5 583v1M863.5 582v1M864.5 580v2M865.5 579v1M866.5 578v1M867.5 576v2M868.5 575v1M869 575.5h1M870 576.5h2M872 577.5h2M874 578.5h2M876 579.5h1M876.5 580v1M877.5 581v4M878.5 585v4M879.5 589v3M880.5 592v4M881.5 596v4M882.5 600v3M883.5 603v4M884.5 607v4M885.5 611v2M886.5 610v2M887.5 609v1M888.5 608v1M889.5 606v2M890.5 605v1M891.5 604v1M892.5 602v2M893.5 601v1M894.5 599v2M895.5 598v1M896.5 596v2M897.5 595v1M898.5 593v2M899.5 592v1M900.5 590v2M901.5 589v1M902.5 590v1M903.5 591v1M904.5 592v1M905.5 593v2M906.5 595v1M907.5 596v1M908.5 597v1M909.5 598v1M910 598.5h8M918.5 596v2M919.5 594v2M920.5 592v2M921.5 591v1M922.5 589v2M923.5 587v2M924.5 585v2M925.5 584v1M925.5 583v1M926.5 580v3M927.5 577v3M928.5 574v3M929.5 571v3M930.5 568v3M931.5 565v3M932.5 562v3M933.5 560v2M933.5 558v2M934.5 554v4M935.5 550v4M936.5 545v5M937.5 541v4M938.5 536v5M939.5 532v4M940.5 528v4M941.5 525v3M942.5 523v2M943.5 522v1M944.5 521v1M945.5 519v2M946.5 518v1M947.5 517v1M948.5 515v2M949.5 514v1M949.5 515v1M950.5 516v2M951.5 518v3M952.5 521v3M953.5 524v2M954.5 526v3M955.5 529v3M956.5 532v2M957.5 534v2M958 534.5h1M959 533.5h1M960 532.5h1M961 531.5h1M962 530.5h1M963 529.5h1M964 528.5h1M965 527.5h1M966.5 528v1M967.5 529v2M968.5 531v1M969.5 532v1M970.5 533v1M971.5 534v2M972.5 536v1M973.5 537v1M974.5 535v2M975.5 533v2M976.5 531v2M977.5 529v2M978.5 528v1M979.5 526v2M980.5 524v2M981.5 522v2M982.5 521v1M982.5 520v1M983.5 518v2M984.5 516v2M985.5 514v2M986.5 511v3M987.5 509v2M988.5 507v2M989.5 505v2M990.5 503v2M991 504.5h2M993 505.5h2M995 506.5h1M996 507.5h2M998 508.5h1M999 508.5h1M1000 507.5h3M1003 506.5h2M1005 505.5h2M1006.5 503v2M1007.5 499v4M1008.5 495v4M1009.5 491v4M1010.5 487v4M1011.5 483v4M1012.5 479v4M1013.5 475v4M1014.5 473v2M1015 472.5h2M1017 471.5h2M1019 470.5h1M1020 469.5h2M1022 468.5h1M1023.5 469v2M1024.5 471v1M1025.5 472v2M1026.5 474v1M1027.5 475v2M1028.5 477v1M1029.5 478v2M1030.5 480v1M1030.5 479v1M1031.5 477v2M1032.5 474v3M1033.5 472v2M1034.5 469v3M1035.5 467v2M1036.5 464v3M1037.5 462v2M1038.5 460v2M1038.5 461v1M1039.5 462v4M1040.5 466v3M1041.5 469v3M1042.5 472v4M1043.5 476v3M1044.5 479v3M1045.5 482v4M1046.5 486v2" fill="none" stroke="#FFFFFF" stroke-width="1" shape-rendering="crispEdges"/>
<g shape-rendering="crispEdges">
<rect x="42" y="589" width="5" height="4" fill="#FFFFFF" />
<rect x="90" y="580" width="5" height="4" fill="#FFFFFF" />
<rect x="131" y="564" width="5" height="4" fill="#FFFFFF" />
<rect x="179" y="558" width="5" height="4" fill="#FFFFFF" />
<rect x="220" y="515" width="5" height="4" fill="#FFFFFF" />
<rect x="268" y="595" width="5" height="4" fill="#FFFFFF" />
<rect x="309" y="557" width="5" height="4" fill="#FFFFFF" />
<rect x="357" y="554" width="5" height="4" fill="#FFFFFF" />
<rect x="398" y="505" width="5" height="4" fill="#FFFFFF" />
<rect x="446" y="546" width="5" height="4" fill="#FFFFFF" />
<rect x="495" y="568" width="5" height="4" fill="#FFFFFF" />
<rect x="543" y="557" width="5" height="4" fill="#FFFFFF" />
<rect x="592" y="512" width="5" height="4" fill="#FFFFFF" />
<rect x="640" y="569" width="5" height="4" fill="#FFFFFF" />
<rect x="689" y="588" width="5" height="4" fill="#FFFFFF" />
<rect x="737" y="508" width="5" height="4" fill="#FFFFFF" />
<rect x="786" y="546" width="5" height="4" fill="#FFFFFF" />
<rect x="834" y="568" width="5" height="4" fill="#FFFFFF" />
<rect x="931" y="558" width="5" height="4" fill="#FFFFFF" />
<rect x="980" y="519" width="5" height="4" fill="#FFFFFF" />
<rect x="1028" y="479" width="5" height="4" fill="#FFFFFF" />
<rect x="883" y="608" width="5" height="5" fill="#FFFFFF" />
</g>
<path d="M4.5 592v1M5.5 590v2M6.5 588v2M7.5 587v1M8.5 585v2M9.5 584v1M10.5 582v2M11.5 580v2M12.5 579v1M13.5 577v2M14.5 575v2M15.5 573v2M16.5 572v1M17.5 570v2M18.5 568v2M19.5 566v2M20.5 565v1M21 564.5h2M23 563.5h2M25 562.5h1M26 561.5h2M28 560.5h1M29 560.5h4M33 559.5h4M37 560.5h2M39 561.5h1M40 562.5h1M41 563.5h2M43 564.5h1M44 565.5h1M45 565.5h1M46 566.5h2M48 567.5h2M50 568.5h2M52 569.5h1M53 569.5h1M54 570.5h3M57 571.5h2M59 572.5h2M61 572.5h8M69 572.5h8M77 572.5h8M85 573.5h2M87 574.5h2M89 575.5h1M90 576.5h2M92 577.5h1M93 576.5h2M95 575.5h1M96 574.5h2M98 573.5h1M99 572.5h2M101 571.5h1M102 571.5h1M103 570.5h2M105 569.5h2M107 568.5h2M109 567.5h1M110.5 565v2M111.5 563v2M112.5 561v2M113.5 560v1M114.5 558v2M115.5 556v2M116.5 554v2M117.5 553v1M118.5 551v2M119.5 549v2M120.5 548v1M121.5 546v2M122.5 545v1M123.5 543v2M124.5 541v2M125.5 540v1M126 540.5h1M127 539.5h3M130 538.5h2M132 537.5h2M134 538.5h1M135 539.5h1M136 540.5h1M137 541.5h1M138 542.5h1M139 543.5h1M140 544.5h1M141 545.5h1M142 546.5h1M143 547.5h1M144 548.5h1M145 549.5h1M146 550.5h1M147 551.5h1M148 552.5h1M149 553.5h1M149.5 554v1M150.5 555v2M151.5 557v2M152.5 559v2M153.5 561v2M154.5 563v2M155.5 565v2M156.5 567v2M157.5 569v1M158 570.5h2M160 571.5h1M161 572.5h1M162 573.5h2M164 574.5h1M165 575.5h1M166 574.5h2M168 573.5h1M169 572.5h1M170 571.5h2M172 570.5h1M173 569.5h1M174 569.5h1M175 568.5h3M178 567.5h2M180 566.5h2M182.5 564v2M183.5 562v2M184.5 560v2M185.5 558v2M186.5 556v2M187.5 554v2M188.5 552v2M189.5 551v1M190.5 549v2M191.5 547v2M192.5 545v2M193.5 543v2M194.5 542v1M195.5 540v2M196.5 538v2M197.5 536v2M198.5 535v1M199 534.5h1M200 533.5h1M201 532.5h1M202 531.5h1M203 530.5h1M204 529.5h1M205 528.5h1M206 527.5h1M207 527.5h1M208 526.5h3M211 525.5h2M213 524.5h2M215 523.5h1M216 522.5h1M217 521.5h1M218 520.5h1M219 519.5h1M220 518.5h1M221 517.5h1M222 516.5h1M223 516.5h2M225 517.5h4M229 518.5h2M231 518.5h1M232 519.5h2M234 520.5h2M236 521.5h2M238 522.5h1M239 523.5h2M241 524.5h2M243 525.5h1M244 526.5h2M246 527.5h1M247.5 528v2M248.5 530v2M249.5 532v2M250.5 534v1M251.5 535v2M252.5 537v2M253.5 539v2M254.5 541v1M254.5 542v1M255.5 543v2M256.5 545v2M257.5 547v2M258.5 549v2M259.5 551v2M260.5 553v2M261.5 555v2M262.5 557v2M263.5 559v2M264.5 561v2M265.5 563v2M266.5 565v1M267.5 566v2M268.5 568v2M269.5 570v2M270.5 572v1M271.5 573v2M272.5 575v2M273.5 577v2M274.5 579v2M275.5 581v2M276.5 583v2M277.5 585v2M278.5 587v1M279.5 588v1M280.5 589v1M281.5 590v1M282.5 591v2M283.5 593v1M284.5 594v1M285.5 595v1M286.5 596v1M287 596.5h4M291 597.5h5M296.5 596v1M297.5 594v2M298.5 593v1M299.5 592v1M300.5 591v1M301.5 589v2M302.5 588v1M303.5 587v1M304 586.5h1M305 585.5h1M306 584.5h1M307 583.5h1M308 582.5h1M309 581.5h1M310 580.5h1M311 579.5h1M312 578.5h2M314 577.5h1M315 576.5h1M316 575.5h2M318 574.5h1M319 573.5h1M320 573.5h1M321 572.5h2M323 571.5h2M325 570.5h2M327 569.5h1M328.5 568v1M329.5 567v1M330.5 566v1M331.5 564v2M332.5 563v1M333.5 562v1M334.5 561v1M335.5 560v1M336 560.5h4M340 561.5h4M344 560.5h2M346 559.5h2M348 558.5h1M349 557.5h2M351 556.5h1M352 556.5h1M353 555.5h3M356 554.5h2M358 553.5h2M360 553.5h1M361 552.5h2M363 551.5h2M365 550.5h2M367 549.5h1M368 549.5h1M369 548.5h3M372 547.5h2M374 546.5h2M376.5 545v1M377.5 544v1M378.5 543v1M379.5 541v2M380.5 540v1M381.5 539v1M382.5 538v1M383.5 537v1M384 537.5h1M385 538.5h2M387 539.5h2M389 540.5h2M391 541.5h1M392 540.5h1M393 539.5h1M394 538.5h1M395 537.5h1M396 536.5h1M397 535.5h1M398 534.5h1M399 533.5h1M400 532.5h1M401.5 531v1M402.5 530v1M403.5 529v1M404.5 527v2M405.5 526v1M406.5 525v1M407.5 524v1M408.5 523v1M409 522.5h1M410 521.5h1M411 520.5h2M413 519.5h1M414 518.5h1M415 517.5h1M416 516.5h1M417 516.5h8M425.5 514v2M426.5 512v2M427.5 511v1M428.5 509v2M429.5 508v1M430.5 506v2M431.5 504v2M432.5 503v1M433 503.5h2M435 502.5h4M439 501.5h2M441.5 502v1M442.5 503v1M443.5 504v1M444.5 505v2M445.5 507v1M446.5 508v1M447.5 509v1M448.5 510v1M449 510.5h4M453 511.5h4M457 511.5h1M458 510.5h2M460 509.5h2M462 508.5h2M464 507.5h1M465 507.5h8M473.5 508v2M474.5 510v2M475.5 512v2M476.5 514v2M477.5 516v2M478.5 518v2M479.5 520v2M480.5 522v1M481.5 523v1M482.5 524v2M483.5 526v1M484.5 527v1M485.5 528v1M486.5 529v2M487.5 531v1M488.5 532v1M489.5 533v2M490.5 535v2M491.5 537v1M492.5 538v2M493.5 540v2M494.5 542v1M495.5 543v2M496.5 545v2M497.5 547v1M497.5 548v1M498.5 549v2M499.5 551v2M500.5 553v2M501.5 555v3M502.5 558v2M503.5 560v2M504.5 562v2M505.5 564v2M505.5 566v1M506.5 567v2M507.5 569v2M508.5 571v2M509.5 573v2M510.5 575v2M511.5 577v2M512.5 579v2M513.5 581v1M514.5 582v2M515.5 584v1M516.5 585v1M517.5 586v2M518.5 588v1M519.5 589v1M520.5 590v2M521.5 592v1M522 592.5h4M526 593.5h4M530 593.5h2M532 594.5h4M536 595.5h2M538 594.5h2M540 593.5h1M541 592.5h1M542 591.5h2M544 590.5h1M545 589.5h1M546 588.5h2M548 587.5h1M549 586.5h1M550 585.5h2M552 584.5h1M553 583.5h1M553.5 582v1M554.5 580v2M555.5 578v2M556.5 576v2M557.5 574v2M558.5 572v2M559.5 570v2M560.5 568v2M561.5 566v2M562.5 565v1M563.5 563v2M564.5 562v1M565.5 561v1M566.5 560v1M567.5 558v2M568.5 557v1M569.5 556v1M570 555.5h2M572 554.5h2M574 553.5h1M575 552.5h2M577 551.5h1M578 550.5h1M579 549.5h1M580 548.5h2M582 547.5h1M583 546.5h1M584 545.5h1M585 544.5h1M586 543.5h1M587 542.5h1M588 541.5h1M589 540.5h2M591 539.5h1M592 538.5h1M593 537.5h1M594 536.5h1M595.5 534v2M596.5 532v2M597.5 531v1M598.5 529v2M599.5 528v1M600.5 526v2M601.5 524v2M602.5 523v1M602.5 522v1M603.5 520v2M604.5 518v2M605.5 516v2M606.5 514v2M607.5 512v2M608.5 510v2M609.5 508v2M610.5 506v2M611.5 504v2M612.5 503v1M613.5 502v1M614.5 500v2M615.5 499v1M616.5 498v1M617.5 496v2M618.5 495v1M619 494.5h2M621 493.5h2M623 492.5h1M624 491.5h2M626 490.5h1M627 491.5h1M628 492.5h1M629 493.5h2M631 494.5h1M632 495.5h1M633 496.5h1M634 497.5h1M634.5 498v1M635.5 499v2M636.5 501v2M637.5 503v3M638.5 506v2M639.5 508v3M640.5 511v2M641.5 513v2M642.5 515v2M642.5 517v1M643.5 518v3M644.5 521v3M645.5 524v3M646.5 527v3M647.5 530v3M648.5 533v3M649.5 536v3M650.5 539v2M650.5 541v1M651.5 542v2M652.5 544v2M653.5 546v2M654.5 548v2M655.5 550v2M656.5 552v2M657.5 554v2M658.5 556v2M658.5 558v1M659.5 559v2M660.5 561v2M661.5 563v2M662.5 565v2M663.5 567v2M664.5 569v2M665.5 571v2M666.5 573v2M667 575.5h2M669 576.5h1M670 577.5h1M671 578.5h2M673 579.5h1M674 580.5h1M675 580.5h1M676 581.5h3M679 582.5h2M681 583.5h2M683 583.5h4M687 584.5h5M692 584.5h4M696 585.5h4M700 584.5h2M702 583.5h2M704 582.5h1M705 581.5h2M707 580.5h1M708 579.5h1M709 578.5h1M710 577.5h1M711 576.5h1M712 575.5h1M713 574.5h1M714 573.5h1M715 572.5h1M716.5 571v1M717.5 569v2M718.5 568v1M719.5 567v1M720.5 566v1M721.5 564v2M722.5 563v1M723.5 562v1M724.5 560v2M725.5 559v1M726.5 557v2M727.5 556v1M728.5 554v2M729.5 553v1M730.5 551v2M731.5 550v1M731.5 549v1M732.5 547v2M733.5 545v2M734.5 543v2M735.5 541v2M736.5 539v2M737.5 537v2M738.5 535v2M739.5 534v1M740.5 533v1M741.5 531v2M742.5 530v1M743.5 529v1M744.5 528v1M745.5 526v2M746.5 525v1M747.5 524v1M748 524.5h1M749 523.5h3M752 522.5h2M754 521.5h2M756 521.5h1M757 522.5h3M760 523.5h2M762 524.5h2M764 525.5h1M765 526.5h1M766 527.5h1M767 528.5h1M768 529.5h1M769 530.5h1M770 531.5h1M771 532.5h1M772.5 533v1M773.5 534v1M774.5 535v1M775.5 536v2M776.5 538v1M777.5 539v1M778.5 540v1M779.5 541v1M780 542.5h1M781 543.5h2M783 544.5h1M784 545.5h1M785 546.5h2M787 547.5h1M788 548.5h1M789.5 549v2M790.5 551v1M791.5 552v2M792.5 554v1M793.5 555v2M794.5 557v1M795.5 558v2M796.5 560v1M797 560.5h8M805 560.5h1M806 561.5h3M809 562.5h2M811 563.5h2M813 564.5h2M815 565.5h2M817 566.5h1M818 567.5h2M820 568.5h1M821 568.5h2M823 567.5h4M827 566.5h2M829 566.5h2M831 565.5h4M835 564.5h2M837 564.5h1M838 565.5h2M840 566.5h2M842 567.5h2M844 568.5h1M845 567.5h2M847 566.5h1M848 565.5h1M849 564.5h2M851 563.5h1M852 562.5h1M853 562.5h4M857 563.5h4M861 564.5h1M862 565.5h1M863 566.5h1M864 567.5h1M865 568.5h1M866 569.5h1M867 570.5h1M868 571.5h1M869 571.5h2M871 572.5h4M875 573.5h2M877 574.5h1M878 575.5h1M879 576.5h1M880 577.5h2M882 578.5h1M883 579.5h1M884 580.5h1M885 581.5h1M886.5 582v1M887.5 583v1M888.5 584v1M889.5 585v2M890.5 587v1M891.5 588v1M892.5 589v1M893.5 590v1M894 590.5h4M898 591.5h4M902 591.5h1M903 592.5h2M905 593.5h2M907 594.5h2M909 595.5h1M910 595.5h1M911 596.5h2M913 597.5h2M915 598.5h2M917 599.5h1M918 598.5h2M920 597.5h2M922 596.5h1M923 595.5h2M925 594.5h1M926.5 593v1M927.5 592v1M928.5 591v1M929.5 589v2M930.5 588v1M931.5 587v1M932.5 586v1M933.5 585v1M934.5 583v2M935.5 582v1M936.5 580v2M937.5 579v1M938.5 577v2M939.5 576v1M940.5 574v2M941.5 573v1M941.5 572v1M942.5 570v2M943.5 568v2M944.5 566v2M945.5 564v2M946.5 562v2M947.5 560v2M948.5 558v2M949.5 556v2M950.5 554v2M951.5 552v2M952.5 551v1M953.5 549v2M954.5 548v1M955.5 546v2M956.5 544v2M957.5 543v1M958.5 541v2M959.5 540v1M960.5 539v1M961.5 537v2M962.5 536v1M963.5 535v1M964.5 533v2M965.5 532v1M966 531.5h2M968 530.5h2M970 529.5h1M971 528.5h2M973 527.5h1M974 527.5h9M983 527.5h1M984 526.5h3M987 525.5h2M989 524.5h2M991 523.5h2M993 522.5h2M995 521.5h1M996 520.5h2M998 519.5h1M999 519.5h1M1000 518.5h2M1002 517.5h2M1004 516.5h2M1006 515.5h1M1007.5 513v2M1008.5 511v2M1009.5 510v1M1010.5 508v2M1011.5 507v1M1012.5 505v2M1013.5 503v2M1014.5 502v1M1015.5 500v2M1016.5 499v1M1017.5 498v1M1018.5 496v2M1019.5 495v1M1020.5 494v1M1021.5 492v2M1022.5 491v1M1023 491.5h1M1024 490.5h2M1026 489.5h2M1028 488.5h2M1030 487.5h1M1031.5 486v1M1032.5 484v2M1033.5 483v1M1034.5 482v1M1035.5 481v1M1036.5 479v2M1037.5 478v1M1038.5 477v1M1039 477.5h1M1040 476.5h3M1043 475.5h2M1045 474.5h2" fill="none" stroke="#808080" stroke-width="1" shape-rendering="crispEdges"/>
<g shape-rendering="crispEdges">
<rect x="3.5" y="559.5" width="2" height="39" fill="#000" stroke="#0A64D8" stroke-width="1"/>
<rect x="11.5" y="538.5" width="2" height="60" fill="#000" stroke="#0A64D8" stroke-width="1"/>
<rect x="19.5" y="550.5" width="2" height="48" fill="#000" stroke="#0A64D8" stroke-width="1"/>
<rect x="27.5" y="568.5" width="2" height="30" fill="#000" stroke="#0A64D8" stroke-width="1"/>
<rect x="35.5" y="581.5" width="2" height="17" fill="#000" stroke="#0A64D8" stroke-width="1"/>
<rect x="43.5" y="591.5" width="2" height="7" fill="#000" stroke="#0A64D8" stroke-width="1"/>
<rect x="51.5" y="560.5" width="2" height="38" fill="#000" stroke="#0A64D8" stroke-width="1"/>
<rect x="59.5" y="563.5" width="2" height="35" fill="#000" stroke="#0A64D8" stroke-width="1"/>
<rect x="67.5" y="568.5" width="2" height="30" fill="#000" stroke="#0A64D8" stroke-width="1"/>
<rect x="75.5" y="580.5" width="2" height="18" fill="#000" stroke="#0A64D8" stroke-width="1"/>
<rect x="83.5" y="592.5" width="2" height="6" fill="#000" stroke="#0A64D8" stroke-width="1"/>
<rect x="91.5" y="582.5" width="2" height="16" fill="#000" stroke="#0A64D8" stroke-width="1"/>
<rect x="100.5" y="537.5" width="2" height="61" fill="#000" stroke="#0A64D8" stroke-width="1"/>
<rect x="108.5" y="544.5" width="2" height="54" fill="#000" stroke="#0A64D8" stroke-width="1"/>
<rect x="116.5" y="514.5" width="2" height="84" fill="#000" stroke="#0A64D8" stroke-width="1"/>
<rect x="124.5" y="525.5" width="2" height="73" fill="#000" stroke="#0A64D8" stroke-width="1"/>
<rect x="132.5" y="566.5" width="2" height="32" fill="#000" stroke="#0A64D8" stroke-width="1"/>
<rect x="140.5" y="576.5" width="2" height="22" fill="#000" stroke="#0A64D8" stroke-width="1"/>
<rect x="148.5" y="588.5" width="2" height="10" fill="#000" stroke="#0A64D8" stroke-width="1"/>
<rect x="156.5" y="590.5" width="2" height="8" fill="#000" stroke="#0A64D8" stroke-width="1"/>
<rect x="164.5" y="558.5" width="2" height="40" fill="#000" stroke="#0A64D8" stroke-width="1"/>
<rect x="172.5" y="535.5" width="2" height="63" fill="#000" stroke="#0A64D8" stroke-width="1"/>
<rect x="180.5" y="560.5" width="2" height="38" fill="#000" stroke="#0A64D8" stroke-width="1"/>
<rect x="188.5" y="513.5" width="2" height="85" fill="#000" stroke="#0A64D8" stroke-width="1"/>
<rect x="197.5" y="511.5" width="2" height="87" fill="#000" stroke="#0A64D8" stroke-width="1"/>
<rect x="205.5" y="517.5" width="2" height="81" fill="#000" stroke="#0A64D8" stroke-width="1"/>
<rect x="213.5" y="523.5" width="2" height="75" fill="#000" stroke="#0A64D8" stroke-width="1"/>
<rect x="221.5" y="517.5" width="2" height="81" fill="#000" stroke="#0A64D8" stroke-width="1"/>
<rect x="229.5" y="525.5" width="2" height="73" fill="#000" stroke="#0A64D8" stroke-width="1"/>
<rect x="237.5" y="530.5" width="2" height="68" fill="#000" stroke="#0A64D8" stroke-width="1"/>
<rect x="245.5" y="541.5" width="2" height="57" fill="#000" stroke="#0A64D8" stroke-width="1"/>
<rect x="253.5" y="592.5" width="2" height="6" fill="#000" stroke="#0A64D8" stroke-width="1"/>
<rect x="261.5" y="599.5" width="2" height="4" fill="#000" stroke="#FF0000" stroke-width="1"/>
<rect x="277.5" y="599.5" width="2" height="4" fill="#000" stroke="#FF0000" stroke-width="1"/>
<rect x="285.5" y="584.5" width="2" height="14" fill="#000" stroke="#0A64D8" stroke-width="1"/>
<rect x="302.5" y="554.5" width="2" height="44" fill="#000" stroke="#0A64D8" stroke-width="1"/>
<rect x="310.5" y="559.5" width="2" height="39" fill="#000" stroke="#0A64D8" stroke-width="1"/>
<rect x="318.5" y="574.5" width="2" height="24" fill="#000" stroke="#0A64D8" stroke-width="1"/>
<rect x="326.5" y="564.5" width="2" height="34" fill="#000" stroke="#0A64D8" stroke-width="1"/>
<rect x="334.5" y="550.5" width="2" height="48" fill="#000" stroke="#0A64D8" stroke-width="1"/>
<rect x="342.5" y="560.5" width="2" height="38" fill="#000" stroke="#0A64D8" stroke-width="1"/>
<rect x="350.5" y="537.5" width="2" height="61" fill="#000" stroke="#0A64D8" stroke-width="1"/>
<rect x="358.5" y="556.5" width="2" height="42" fill="#000" stroke="#0A64D8" stroke-width="1"/>
<rect x="366.5" y="545.5" width="2" height="53" fill="#000" stroke="#0A64D8" stroke-width="1"/>
<rect x="374.5" y="532.5" width="2" height="66" fill="#000" stroke="#0A64D8" stroke-width="1"/>
<rect x="382.5" y="518.5" width="2" height="80" fill="#000" stroke="#0A64D8" stroke-width="1"/>
<rect x="390.5" y="558.5" width="2" height="40" fill="#000" stroke="#0A64D8" stroke-width="1"/>
<rect x="399.5" y="507.5" width="2" height="91" fill="#000" stroke="#0A64D8" stroke-width="1"/>
<rect x="407.5" y="504.5" width="2" height="94" fill="#000" stroke="#0A64D8" stroke-width="1"/>
<rect x="415.5" y="494.5" width="2" height="104" fill="#000" stroke="#0A64D8" stroke-width="1"/>
<rect x="423.5" y="517.5" width="2" height="81" fill="#000" stroke="#0A64D8" stroke-width="1"/>
<rect x="431.5" y="495.5" width="2" height="103" fill="#000" stroke="#0A64D8" stroke-width="1"/>
<rect x="439.5" y="497.5" width="2" height="101" fill="#000" stroke="#0A64D8" stroke-width="1"/>
<rect x="447.5" y="548.5" width="2" height="50" fill="#000" stroke="#0A64D8" stroke-width="1"/>
<rect x="455.5" y="499.5" width="2" height="99" fill="#000" stroke="#0A64D8" stroke-width="1"/>
<rect x="463.5" y="499.5" width="2" height="99" fill="#000" stroke="#0A64D8" stroke-width="1"/>
<rect x="471.5" y="495.5" width="2" height="103" fill="#000" stroke="#0A64D8" stroke-width="1"/>
<rect x="479.5" y="573.5" width="2" height="25" fill="#000" stroke="#0A64D8" stroke-width="1"/>
<rect x="496.5" y="570.5" width="2" height="28" fill="#000" stroke="#0A64D8" stroke-width="1"/>
<rect x="504.5" y="589.5" width="2" height="9" fill="#000" stroke="#0A64D8" stroke-width="1"/>
<rect x="512.5" y="578.5" width="2" height="20" fill="#000" stroke="#0A64D8" stroke-width="1"/>
<rect x="520.5" y="599.5" width="2" height="27" fill="#000" stroke="#FF0000" stroke-width="1"/>
<rect x="528.5" y="599.5" width="2" height="2" fill="#000" stroke="#FF0000" stroke-width="1"/>
<rect x="536.5" y="580.5" width="2" height="18" fill="#000" stroke="#0A64D8" stroke-width="1"/>
<rect x="544.5" y="559.5" width="2" height="39" fill="#000" stroke="#0A64D8" stroke-width="1"/>
<rect x="552.5" y="552.5" width="2" height="46" fill="#000" stroke="#0A64D8" stroke-width="1"/>
<rect x="560.5" y="541.5" width="2" height="57" fill="#000" stroke="#0A64D8" stroke-width="1"/>
<rect x="568.5" y="548.5" width="2" height="50" fill="#000" stroke="#0A64D8" stroke-width="1"/>
<rect x="576.5" y="557.5" width="2" height="41" fill="#000" stroke="#0A64D8" stroke-width="1"/>
<rect x="584.5" y="524.5" width="2" height="74" fill="#000" stroke="#0A64D8" stroke-width="1"/>
<rect x="593.5" y="514.5" width="2" height="84" fill="#000" stroke="#0A64D8" stroke-width="1"/>
<rect x="601.5" y="473.5" width="2" height="125" fill="#000" stroke="#0A64D8" stroke-width="1"/>
<rect x="609.5" y="466.5" width="2" height="132" fill="#000" stroke="#0A64D8" stroke-width="1"/>
<rect x="617.5" y="501.5" width="2" height="97" fill="#000" stroke="#0A64D8" stroke-width="1"/>
<rect x="625.5" y="498.5" width="2" height="100" fill="#000" stroke="#0A64D8" stroke-width="1"/>
<rect x="633.5" y="548.5" width="2" height="50" fill="#000" stroke="#0A64D8" stroke-width="1"/>
<rect x="641.5" y="571.5" width="2" height="27" fill="#000" stroke="#0A64D8" stroke-width="1"/>
<rect x="649.5" y="585.5" width="2" height="13" fill="#000" stroke="#0A64D8" stroke-width="1"/>
<rect x="657.5" y="584.5" width="2" height="14" fill="#000" stroke="#0A64D8" stroke-width="1"/>
<rect x="665.5" y="585.5" width="2" height="13" fill="#000" stroke="#0A64D8" stroke-width="1"/>
<rect x="673.5" y="576.5" width="2" height="22" fill="#000" stroke="#0A64D8" stroke-width="1"/>
<rect x="681.5" y="587.5" width="2" height="11" fill="#000" stroke="#0A64D8" stroke-width="1"/>
<rect x="690.5" y="590.5" width="2" height="8" fill="#000" stroke="#0A64D8" stroke-width="1"/>
<rect x="698.5" y="587.5" width="2" height="11" fill="#000" stroke="#0A64D8" stroke-width="1"/>
<rect x="706.5" y="562.5" width="2" height="36" fill="#000" stroke="#0A64D8" stroke-width="1"/>
<rect x="714.5" y="535.5" width="2" height="63" fill="#000" stroke="#0A64D8" stroke-width="1"/>
<rect x="722.5" y="537.5" width="2" height="61" fill="#000" stroke="#0A64D8" stroke-width="1"/>
<rect x="730.5" y="529.5" width="2" height="69" fill="#000" stroke="#0A64D8" stroke-width="1"/>
<rect x="738.5" y="510.5" width="2" height="88" fill="#000" stroke="#0A64D8" stroke-width="1"/>
<rect x="746.5" y="512.5" width="2" height="86" fill="#000" stroke="#0A64D8" stroke-width="1"/>
<rect x="754.5" y="517.5" width="2" height="81" fill="#000" stroke="#0A64D8" stroke-width="1"/>
<rect x="762.5" y="554.5" width="2" height="44" fill="#000" stroke="#0A64D8" stroke-width="1"/>
<rect x="770.5" y="569.5" width="2" height="29" fill="#000" stroke="#0A64D8" stroke-width="1"/>
<rect x="778.5" y="554.5" width="2" height="44" fill="#000" stroke="#0A64D8" stroke-width="1"/>
<rect x="787.5" y="548.5" width="2" height="50" fill="#000" stroke="#0A64D8" stroke-width="1"/>
<rect x="795.5" y="576.5" width="2" height="22" fill="#000" stroke="#0A64D8" stroke-width="1"/>
<rect x="803.5" y="556.5" width="2" height="42" fill="#000" stroke="#0A64D8" stroke-width="1"/>
<rect x="811.5" y="585.5" width="2" height="13" fill="#000" stroke="#0A64D8" stroke-width="1"/>
<rect x="819.5" y="578.5" width="2" height="20" fill="#000" stroke="#0A64D8" stroke-width="1"/>
<rect x="827.5" y="535.5" width="2" height="63" fill="#000" stroke="#0A64D8" stroke-width="1"/>
<rect x="835.5" y="570.5" width="2" height="28" fill="#000" stroke="#0A64D8" stroke-width="1"/>
<rect x="843.5" y="573.5" width="2" height="25" fill="#000" stroke="#0A64D8" stroke-width="1"/>
<rect x="851.5" y="555.5" width="2" height="43" fill="#000" stroke="#0A64D8" stroke-width="1"/>
<rect x="859.5" y="586.5" width="2" height="12" fill="#000" stroke="#0A64D8" stroke-width="1"/>
<rect x="867.5" y="575.5" width="2" height="23" fill="#000" stroke="#0A64D8" stroke-width="1"/>
<rect x="875.5" y="579.5" width="2" height="19" fill="#000" stroke="#0A64D8" stroke-width="1"/>
<rect x="884.5" y="599.5" width="2" height="12" fill="#000" stroke="#FF0000" stroke-width="1"/>
<rect x="892.5" y="599.5" width="2" height="1" fill="#000" stroke="#FF0000" stroke-width="1"/>
<rect x="900.5" y="589.5" width="2" height="9" fill="#000" stroke="#0A64D8" stroke-width="1"/>
<rect x="924.5" y="584.5" width="2" height="14" fill="#000" stroke="#0A64D8" stroke-width="1"/>
<rect x="932.5" y="560.5" width="2" height="38" fill="#000" stroke="#0A64D8" stroke-width="1"/>
<rect x="940.5" y="525.5" width="2" height="73" fill="#000" stroke="#0A64D8" stroke-width="1"/>
<rect x="948.5" y="514.5" width="2" height="84" fill="#000" stroke="#0A64D8" stroke-width="1"/>
<rect x="956.5" y="535.5" width="2" height="63" fill="#000" stroke="#0A64D8" stroke-width="1"/>
<rect x="964.5" y="528.5" width="2" height="70" fill="#000" stroke="#0A64D8" stroke-width="1"/>
<rect x="972.5" y="537.5" width="2" height="61" fill="#000" stroke="#0A64D8" stroke-width="1"/>
<rect x="981.5" y="521.5" width="2" height="77" fill="#000" stroke="#0A64D8" stroke-width="1"/>
<rect x="989.5" y="503.5" width="2" height="95" fill="#000" stroke="#0A64D8" stroke-width="1"/>
<rect x="997.5" y="508.5" width="2" height="90" fill="#000" stroke="#0A64D8" stroke-width="1"/>
<rect x="1005.5" y="505.5" width="2" height="93" fill="#000" stroke="#0A64D8" stroke-width="1"/>
<rect x="1013.5" y="473.5" width="2" height="125" fill="#000" stroke="#0A64D8" stroke-width="1"/>
<rect x="1021.5" y="468.5" width="2" height="130" fill="#000" stroke="#0A64D8" stroke-width="1"/>
<rect x="1029.5" y="481.5" width="2" height="117" fill="#000" stroke="#0A64D8" stroke-width="1"/>
<rect x="1037.5" y="460.5" width="2" height="138" fill="#000" stroke="#0A64D8" stroke-width="1"/>
<rect x="1045.5" y="487.5" width="2" height="111" fill="#000" stroke="#0A64D8" stroke-width="1"/>
</g>
<g shape-rendering="crispEdges">
<rect x="609.5" y="460.5" width="2" height="6" fill="none" stroke="#00FF00" stroke-width="1"/>
<rect x="1021.5" y="460.5" width="2" height="8" fill="none" stroke="#00FF00" stroke-width="1"/>
<rect x="1037.5" y="460.5" width="2" height="1" fill="none" stroke="#00FF00" stroke-width="1"/>
</g>
<line x1="4" y1="487.5" x2="1048" y2="487.5" stroke="#FFFF00" stroke-width="1" stroke-dasharray="3 3" shape-rendering="crispEdges"/>
<path d="M4 589.5h1M5 588.5h2M7 587.5h2M9 586.5h1M10 585.5h2M12 584.5h1M13 583.5h2M15 582.5h2M17 581.5h1M18 580.5h2M20 579.5h1M21 579.5h1M22 580.5h2M24 581.5h2M26 582.5h2M28 583.5h1M29 584.5h2M31 585.5h2M33 586.5h1M34 587.5h2M36 588.5h1M37.5 589v1M38.5 590v1M39.5 591v1M40.5 592v2M41.5 594v1M42.5 595v1M43.5 596v1M44.5 597v1M45 597.5h1M46 596.5h3M49 595.5h2M51 594.5h2M53 593.5h2M55 592.5h1M56 591.5h1M57 590.5h2M59 589.5h1M60 588.5h1M61 588.5h1M62 587.5h2M64 586.5h2M66 585.5h2M68 584.5h1M69 584.5h1M70 585.5h2M72 586.5h2M74 587.5h2M76 588.5h1M77 589.5h1M78 590.5h1M79 591.5h2M81 592.5h1M82 593.5h1M83 594.5h1M84 595.5h1M85 595.5h2M87 596.5h4M91 597.5h2M93 596.5h1M94 595.5h1M95 594.5h1M96 593.5h2M98 592.5h1M99 591.5h1M100 590.5h1M101 589.5h1M102.5 587v2M103.5 586v1M104.5 585v1M105.5 583v2M106.5 582v1M107.5 581v1M108.5 579v2M109.5 578v1M110.5 576v2M111.5 575v1M112.5 574v1M113.5 572v2M114.5 571v1M115.5 570v1M116.5 568v2M117.5 567v1M118 567.5h2M120 566.5h4M124 565.5h2M126 565.5h2M128 566.5h4M132 567.5h2M134 568.5h1M135 569.5h1M136 570.5h2M138 571.5h1M139 572.5h1M140 573.5h1M141 574.5h1M142 575.5h1M143 576.5h1M144 577.5h2M146 578.5h1M147 579.5h1M148 580.5h1M149 581.5h1M150 581.5h1M151 582.5h3M154 583.5h2M156 584.5h2M158 584.5h1M159 583.5h3M162 582.5h2M164 581.5h2M166 580.5h1M167 579.5h1M168 578.5h2M170 577.5h1M171 576.5h1M172 575.5h1M173 574.5h1M174 573.5h1M175 572.5h1M176 571.5h2M178 570.5h1M179 569.5h1M180 568.5h1M181 567.5h1M181.5 566v1M182.5 564v2M183.5 562v2M184.5 559v3M185.5 557v2M186.5 554v3M187.5 552v2M188.5 550v2M189.5 548v2M190.5 546v2M191.5 545v1M192.5 543v2M193.5 541v2M194.5 540v1M195.5 538v2M196.5 537v1M197.5 535v2M198.5 534v1M199.5 532v2M200.5 530v2M201.5 528v2M202.5 526v2M203.5 524v2M204.5 522v2M205.5 520v2M206.5 519v1M207 519.5h2M209 520.5h4M213 521.5h2M215 521.5h4M219 522.5h4M223 522.5h1M224 523.5h3M227 524.5h2M229 525.5h2M231 525.5h1M232 526.5h3M235 527.5h2M237 528.5h2M239 528.5h1M240 529.5h3M243 530.5h2M245 531.5h2M247.5 532v1M248.5 533v1M249.5 534v1M250.5 535v2M251.5 537v1M252.5 538v1M253.5 539v1M254.5 540v1M255.5 541v1M256.5 542v1M257.5 543v1M258.5 544v2M259.5 546v1M260.5 547v1M261.5 548v1M262.5 549v1M263 550.5h1M264 551.5h1M265 552.5h1M266 553.5h1M267 554.5h1M268 555.5h1M269 556.5h1M270 557.5h1M271 557.5h2M273 558.5h4M277 559.5h2M279 559.5h2M281 560.5h4M285 561.5h2M287 562.5h2M289 563.5h1M290 564.5h2M292 565.5h1M293 566.5h2M295 567.5h1M296 567.5h4M300 568.5h4M304 568.5h1M305 569.5h2M307 570.5h2M309 571.5h2M311 572.5h1M312 572.5h1M313 573.5h2M315 574.5h2M317 575.5h2M319 576.5h1M320 577.5h1M321 578.5h1M322 579.5h2M324 580.5h1M325 581.5h1M326 582.5h1M327 583.5h1M328 583.5h8M336 583.5h2M338 582.5h4M342 581.5h2M344 581.5h1M345 580.5h2M347 579.5h2M349 578.5h2M351 577.5h1M352 577.5h4M356 576.5h4M360 576.5h1M361 575.5h2M363 574.5h2M365 573.5h2M367 572.5h1M368 572.5h8M376 572.5h1M377 571.5h2M379 570.5h2M381 569.5h2M383 568.5h1M384 568.5h2M386 569.5h4M390 570.5h2M392 569.5h1M393 568.5h1M394 567.5h1M395 566.5h2M397 565.5h1M398 564.5h1M399 563.5h1M400 562.5h1M401 561.5h1M402 560.5h1M403 559.5h2M405 558.5h1M406 557.5h1M407 556.5h1M408 555.5h1M409.5 553v2M410.5 551v2M411.5 550v1M412.5 548v2M413.5 547v1M414.5 545v2M415.5 543v2M416.5 542v1M417 542.5h2M419 541.5h4M423 540.5h2M425 540.5h1M426 539.5h2M428 538.5h2M430 537.5h2M432 536.5h1M433 535.5h1M434 534.5h1M435 533.5h2M437 532.5h1M438 531.5h1M439 530.5h1M440 529.5h1M441 529.5h4M445 530.5h4M449.5 529v1M450.5 527v2M451.5 526v1M452.5 525v1M453.5 524v1M454.5 522v2M455.5 521v1M456.5 520v1M457 520.5h1M458 519.5h2M460 518.5h2M462 517.5h2M464 516.5h1M464.5 515v1M465.5 513v2M466.5 511v2M467.5 509v2M468.5 507v2M469.5 505v2M470.5 503v2M471.5 501v2M472.5 500v1M472.5 501v1M473.5 502v2M474.5 504v2M475.5 506v2M476.5 508v2M477.5 510v2M478.5 512v2M479.5 514v2M480.5 516v1M480.5 517v1M481.5 518v3M482.5 521v3M483.5 524v3M484.5 527v3M485.5 530v3M486.5 533v3M487.5 536v3M488.5 539v2M489.5 541v2M490.5 543v2M491.5 545v2M492.5 547v2M493.5 549v2M494.5 551v2M495.5 553v2M496.5 555v2M497.5 557v1M498 558.5h2M500 559.5h1M501 560.5h1M502 561.5h2M504 562.5h1M505 563.5h1M506 562.5h1M507 561.5h1M508 560.5h1M509 559.5h1M510 558.5h1M511 557.5h1M512 556.5h1M513 555.5h1M514.5 556v2M515.5 558v2M516.5 560v2M517.5 562v2M518.5 564v2M519.5 566v2M520.5 568v2M521.5 570v1M522 571.5h1M523 572.5h1M524 573.5h1M525 574.5h1M526 575.5h1M527 576.5h1M528 577.5h1M529 578.5h1M530 579.5h2M532 580.5h1M533 581.5h1M534 582.5h2M536 583.5h1M537 584.5h1M538.5 582v2M539.5 580v2M540.5 578v2M541.5 577v1M542.5 575v2M543.5 573v2M544.5 571v2M545.5 570v1M546 569.5h1M547 568.5h1M548 567.5h1M549 566.5h1M550 565.5h1M551 564.5h1M552 563.5h1M553 562.5h1M554 561.5h2M556 560.5h2M558 559.5h1M559 558.5h2M561 557.5h1M562 557.5h8M570 557.5h4M574 558.5h4M578 557.5h1M579 556.5h1M580 555.5h1M581 554.5h1M582 553.5h1M583 552.5h1M584 551.5h1M585 550.5h1M586.5 548v2M587.5 547v1M588.5 545v2M589.5 543v2M590.5 542v1M591.5 540v2M592.5 539v1M593.5 537v2M594.5 536v1M594.5 534v2M595.5 528v6M596.5 522v6M597.5 516v6M598.5 511v5M599.5 505v6M600.5 499v6M601.5 493v6M602.5 490v3M602.5 488v2M603.5 483v5M604.5 478v5M605.5 473v5M606.5 467v6M607.5 462v5M608.5 457v5M609.5 452v5M610.5 449v3M610.5 447v2M611.5 443v4M612.5 439v4M613.5 435v4M614.5 431v4M615.5 427v4M616.5 423v4M617.5 419v4M618.5 416v3M619.5 414v2M620.5 413v1M621.5 412v1M622.5 410v2M623.5 409v1M624.5 408v1M625.5 406v2M626.5 405v1M626.5 406v1M627.5 407v4M628.5 411v4M629.5 415v4M630.5 419v3M631.5 422v4M632.5 426v4M633.5 430v4M634.5 434v2M634.5 436v1M635.5 437v3M636.5 440v4M637.5 444v3M638.5 447v3M639.5 450v3M640.5 453v4M641.5 457v3M642.5 460v2M642.5 462v2M643.5 464v4M644.5 468v5M645.5 473v4M646.5 477v5M647.5 482v4M648.5 486v5M649.5 491v4M650.5 495v3M651.5 498v2M652.5 500v1M653.5 501v1M654.5 502v2M655.5 504v1M656.5 505v1M657.5 506v2M658.5 508v1M659 508.5h8M667 507.5h2M669 506.5h1M670 505.5h1M671 504.5h2M673 503.5h1M674 502.5h1M675 502.5h1M676 501.5h2M678 500.5h2M680 499.5h2M682 498.5h1M683 498.5h4M687 497.5h5M692 497.5h2M694 498.5h4M698 499.5h2M700 499.5h1M701 498.5h3M704 497.5h2M706 496.5h2M708 495.5h2M710 494.5h2M712 493.5h1M713 492.5h2M715 491.5h1M716 491.5h1M717 490.5h2M719 489.5h2M721 488.5h2M723 487.5h1M724 487.5h4M728 486.5h4M732 486.5h2M734 487.5h4M738 488.5h2M740 489.5h1M741 490.5h1M742 491.5h1M743 492.5h1M744 493.5h1M745 494.5h1M746 495.5h1M747 496.5h1M748.5 497v2M749.5 499v2M750.5 501v2M751.5 503v1M752.5 504v2M753.5 506v2M754.5 508v2M755.5 510v1M756.5 511v1M757.5 512v2M758.5 514v1M759.5 515v1M760.5 516v1M761.5 517v2M762.5 519v1M763.5 520v1M764 521.5h1M765 522.5h1M766 523.5h2M768 524.5h1M769 525.5h1M770 526.5h1M771 527.5h1M772 527.5h2M774 528.5h4M778 529.5h2M780 529.5h4M784 528.5h5M789 529.5h1M790 530.5h1M791 531.5h2M793 532.5h1M794 533.5h1M795 534.5h1M796 535.5h1M796.5 536v1M797.5 537v2M798.5 539v3M799.5 542v3M800.5 545v2M801.5 547v3M802.5 550v3M803.5 553v2M804.5 555v2M805.5 557v2M806.5 559v2M807.5 561v2M808.5 563v2M809.5 565v2M810.5 567v2M811.5 569v2M812.5 571v1M813 572.5h1M814 573.5h1M815 574.5h2M817 575.5h1M818 576.5h1M819 577.5h1M820 578.5h1M821 578.5h8M829 578.5h4M833 579.5h4M837 579.5h4M841 580.5h4M845 580.5h1M846 581.5h3M849 582.5h2M851 583.5h2M853 583.5h1M854 584.5h3M857 585.5h2M859 586.5h2M861 586.5h1M862 587.5h2M864 588.5h2M866 589.5h2M868 590.5h1M869 591.5h2M871 592.5h2M873 593.5h1M874 594.5h2M876 595.5h1M877 595.5h2M879 596.5h4M883 597.5h3M886 597.5h8M894 597.5h8M902 597.5h8M910 597.5h8M918 597.5h8M926 597.5h1M927 596.5h3M930 595.5h2M932 594.5h2M934 593.5h1M935 592.5h1M936 591.5h1M937 590.5h1M938 589.5h1M939 588.5h1M940 587.5h1M941 586.5h1M942.5 584v2M943.5 583v1M944.5 582v1M945.5 580v2M946.5 579v1M947.5 578v1M948.5 576v2M949.5 575v1M950 574.5h1M951 573.5h1M952 572.5h2M954 571.5h1M955 570.5h1M956 569.5h1M957 568.5h1M958 568.5h2M960 567.5h4M964 566.5h2M966 566.5h4M970 567.5h4M974 567.5h1M975 566.5h2M977 565.5h2M979 564.5h2M981 563.5h2M983.5 562v1M984.5 560v2M985.5 559v1M986.5 558v1M987.5 557v1M988.5 555v2M989.5 554v1M990.5 553v1M991.5 552v1M992.5 551v1M993.5 550v1M994.5 548v2M995.5 547v1M996.5 546v1M997.5 545v1M998.5 544v1M999 544.5h1M1000 543.5h2M1002 542.5h2M1004 541.5h2M1006 540.5h1M1007 539.5h2M1009 538.5h2M1011 537.5h1M1012 536.5h2M1014 535.5h1M1015 534.5h1M1016 533.5h1M1017 532.5h2M1019 531.5h1M1020 530.5h1M1021 529.5h1M1022 528.5h1M1023 527.5h2M1025 526.5h2M1027 525.5h1M1028 524.5h2M1030 523.5h1M1031 523.5h2M1033 522.5h4M1037 521.5h2M1039 521.5h8" fill="none" stroke="#FFFF00" stroke-width="1" shape-rendering="crispEdges"/>
<path d="M4 596.5h1M5 595.5h2M7 594.5h1M8 593.5h1M9 592.5h2M11 591.5h1M12 590.5h1M13 590.5h1M14 589.5h3M17 588.5h2M19 587.5h2M21 587.5h4M25 586.5h4M29 586.5h2M31 587.5h4M35 588.5h2M37 588.5h4M41 589.5h4M45 589.5h4M49 588.5h4M53 588.5h4M57 589.5h4M61 589.5h2M63 590.5h4M67 591.5h2M69 591.5h8M77 591.5h8M85 591.5h8M93 591.5h2M95 590.5h4M99 589.5h3M102 589.5h2M104 588.5h4M108 587.5h2M110 586.5h2M112 585.5h2M114 584.5h1M115 583.5h2M117 582.5h1M118 581.5h2M120 580.5h2M122 579.5h1M123 578.5h2M125 577.5h1M126 577.5h1M127 576.5h3M130 575.5h2M132 574.5h2M134 574.5h1M135 573.5h3M138 572.5h2M140 571.5h2M142 571.5h2M144 572.5h4M148 573.5h2M150 573.5h2M152 574.5h4M156 575.5h2M158 575.5h2M160 576.5h4M164 577.5h2M166 577.5h8M174 577.5h1M175 576.5h2M177 575.5h2M179 574.5h2M181 573.5h1M182.5 572v1M183.5 571v1M184.5 570v1M185.5 568v2M186.5 567v1M187.5 566v1M188.5 565v1M189.5 564v1M190.5 562v2M191.5 561v1M192.5 559v2M193.5 558v1M194.5 557v1M195.5 555v2M196.5 554v1M197.5 552v2M198.5 551v1M199.5 550v1M200.5 548v2M201.5 547v1M202.5 546v1M203.5 545v1M204.5 543v2M205.5 542v1M206.5 541v1M207 540.5h1M208 539.5h1M209 538.5h1M210 537.5h1M211 536.5h1M212 535.5h1M213 534.5h1M214 533.5h1M215 532.5h2M217 531.5h1M218 530.5h1M219 529.5h2M221 528.5h1M222 527.5h1M223 527.5h1M224 526.5h2M226 525.5h2M228 524.5h2M230 523.5h1M231 523.5h4M235 524.5h4M239 524.5h1M240 525.5h3M243 526.5h2M245 527.5h2M247 528.5h2M249 529.5h1M250 530.5h1M251 531.5h2M253 532.5h1M254 533.5h1M255 534.5h2M257 535.5h1M258 536.5h1M259 537.5h2M261 538.5h1M262 539.5h1M263 540.5h2M265 541.5h1M266 542.5h1M267 543.5h2M269 544.5h1M270 545.5h1M271 546.5h2M273 547.5h1M274 548.5h1M275 549.5h2M277 550.5h1M278 551.5h1M279 552.5h2M281 553.5h2M283 554.5h1M284 555.5h2M286 556.5h1M287 557.5h2M289 558.5h2M291 559.5h2M293 560.5h2M295 561.5h1M296 561.5h1M297 562.5h3M300 563.5h2M302 564.5h2M304 564.5h2M306 565.5h4M310 566.5h2M312 567.5h2M314 568.5h1M315 569.5h1M316 570.5h2M318 571.5h1M319 572.5h1M320 572.5h1M321 573.5h2M323 574.5h2M325 575.5h2M327 576.5h1M328 576.5h2M330 577.5h4M334 578.5h2M336 578.5h8M344 578.5h2M346 579.5h4M350 580.5h2M352 580.5h8M360 580.5h1M361 579.5h3M364 578.5h2M366 577.5h2M368 577.5h1M369 576.5h3M372 575.5h2M374 574.5h2M376 574.5h2M378 573.5h4M382 572.5h2M384 572.5h4M388 571.5h4M392 570.5h2M394 569.5h2M396 568.5h2M398 567.5h2M400 566.5h1M401 565.5h2M403 564.5h2M405 563.5h1M406 562.5h2M408 561.5h1M409 560.5h2M411 559.5h2M413 558.5h1M414 557.5h2M416 556.5h1M417 555.5h2M419 554.5h2M421 553.5h1M422 552.5h2M424 551.5h1M425 550.5h1M426 549.5h1M427 548.5h2M429 547.5h1M430 546.5h1M431 545.5h1M432 544.5h1M433.5 543v1M434.5 542v1M435.5 541v1M436.5 539v2M437.5 538v1M438.5 537v1M439.5 536v1M440.5 535v1M441 535.5h4M445 534.5h4M449 533.5h1M450 532.5h1M451 531.5h2M453 530.5h1M454 529.5h1M455 528.5h1M456 527.5h1M457 526.5h2M459 525.5h1M460 524.5h1M461 523.5h2M463 522.5h1M464 521.5h1M465 520.5h2M467 519.5h1M468 518.5h1M469 517.5h2M471 516.5h1M472 515.5h1M473 515.5h1M474 516.5h3M477 517.5h2M479 518.5h2M481.5 519v1M482.5 520v2M483.5 522v1M484.5 523v1M485.5 524v1M486.5 525v2M487.5 527v1M488.5 528v1M489 528.5h2M491 529.5h4M495 530.5h3M498.5 531v1M499.5 532v2M500.5 534v1M501.5 535v1M502.5 536v1M503.5 537v2M504.5 539v1M505.5 540v1M506.5 541v2M507.5 543v1M508.5 544v1M509.5 545v2M510.5 547v1M511.5 548v1M512.5 549v2M513.5 551v1M514.5 552v2M515.5 554v2M516.5 556v2M517.5 558v2M518.5 560v2M519.5 562v2M520.5 564v2M521.5 566v1M522 566.5h1M523 567.5h2M525 568.5h2M527 569.5h2M529 570.5h1M530 570.5h8M538 570.5h4M542 571.5h4M546 571.5h8M554 571.5h8M562 570.5h1M563 569.5h1M564 568.5h2M566 567.5h1M567 566.5h1M568 565.5h1M569 564.5h1M570 564.5h1M571 563.5h2M573 562.5h2M575 561.5h2M577 560.5h1M578 559.5h2M580 558.5h2M582 557.5h1M583 556.5h2M585 555.5h1M586 554.5h1M587 553.5h2M589 552.5h1M590 551.5h1M591 550.5h2M593 549.5h1M594 548.5h1M594.5 547v1M595.5 544v3M596.5 542v2M597.5 539v3M598.5 536v3M599.5 533v3M600.5 531v2M601.5 528v3M602.5 526v2M602.5 525v1M603.5 521v4M604.5 518v3M605.5 515v3M606.5 511v4M607.5 508v3M608.5 505v3M609.5 501v4M610.5 499v2M610.5 498v1M611.5 495v3M612.5 492v3M613.5 489v3M614.5 485v4M615.5 482v3M616.5 479v3M617.5 476v3M618.5 474v2M618.5 473v1M619.5 470v3M620.5 468v2M621.5 465v3M622.5 462v3M623.5 459v3M624.5 457v2M625.5 454v3M626.5 452v2M627.5 450v2M628.5 449v1M629.5 448v1M630.5 446v2M631.5 445v1M632.5 444v1M633.5 442v2M634.5 441v1M635 441.5h2M637 440.5h4M641 439.5h2M643.5 440v2M644.5 442v2M645.5 444v1M646.5 445v2M647.5 447v1M648.5 448v2M649.5 450v2M650.5 452v1M650.5 453v1M651.5 454v2M652.5 456v2M653.5 458v3M654.5 461v2M655.5 463v3M656.5 466v2M657.5 468v2M658.5 470v2M659.5 472v2M660.5 474v2M661.5 476v2M662.5 478v2M663.5 480v2M664.5 482v2M665.5 484v2M666.5 486v1M667.5 487v2M668.5 489v2M669.5 491v2M670.5 493v1M671.5 494v2M672.5 496v2M673.5 498v2M674.5 500v1M675 500.5h1M676 501.5h3M679 502.5h2M681 503.5h2M683 503.5h9M692 503.5h2M694 502.5h4M698 501.5h2M700 501.5h1M701 500.5h3M704 499.5h2M706 498.5h2M708 498.5h1M709 497.5h3M712 496.5h2M714 495.5h2M716 495.5h2M718 494.5h4M722 493.5h2M724 493.5h2M726 492.5h4M730 491.5h2M732 491.5h8M740 491.5h1M741 492.5h3M744 493.5h2M746 494.5h2M748 495.5h1M749 496.5h1M750 497.5h2M752 498.5h1M753 499.5h1M754 500.5h1M755 501.5h1M756 502.5h1M757 503.5h1M758 504.5h2M760 505.5h1M761 506.5h1M762 507.5h1M763 508.5h1M764 509.5h1M765 510.5h1M766 511.5h2M768 512.5h1M769 513.5h1M770 514.5h1M771 515.5h1M772 515.5h1M773 516.5h2M775 517.5h2M777 518.5h2M779 519.5h1M780 519.5h1M781 520.5h2M783 521.5h2M785 522.5h2M787 523.5h2M789 524.5h2M791 525.5h1M792 526.5h1M793 527.5h2M795 528.5h1M796 529.5h1M797.5 530v2M798.5 532v2M799.5 534v1M800.5 535v2M801.5 537v1M802.5 538v2M803.5 540v2M804.5 542v1M805.5 543v2M806.5 545v1M807.5 546v2M808.5 548v1M809.5 549v2M810.5 551v1M811.5 552v2M812.5 554v1M813.5 555v1M814.5 556v2M815.5 558v1M816.5 559v1M817.5 560v1M818.5 561v2M819.5 563v1M820.5 564v1M821 564.5h1M822 565.5h2M824 566.5h2M826 567.5h2M828 568.5h1M829 569.5h1M830 570.5h1M831 571.5h2M833 572.5h1M834 573.5h1M835 574.5h1M836 575.5h1M837 575.5h1M838 576.5h2M840 577.5h2M842 578.5h2M844 579.5h1M845 579.5h1M846 580.5h3M849 581.5h2M851 582.5h2M853 582.5h2M855 583.5h4M859 584.5h2M861 584.5h1M862 585.5h3M865 586.5h2M867 587.5h2M869 587.5h1M870 588.5h3M873 589.5h2M875 590.5h2M877 590.5h1M878 591.5h3M881 592.5h3M884 593.5h2M886 593.5h2M888 594.5h4M892 595.5h2M894 595.5h4M898 596.5h4M902 596.5h4M906 597.5h4M910 597.5h8M918 597.5h8M926 597.5h4M930 596.5h4M934 596.5h1M935 595.5h2M937 594.5h2M939 593.5h2M941 592.5h1M942 591.5h2M944 590.5h2M946 589.5h1M947 588.5h2M949 587.5h1M950 586.5h2M952 585.5h1M953 584.5h1M954 583.5h2M956 582.5h1M957 581.5h1M958 580.5h2M960 579.5h2M962 578.5h1M963 577.5h2M965 576.5h1M966 575.5h2M968 574.5h2M970 573.5h1M971 572.5h2M973 571.5h1M974 571.5h1M975 570.5h2M977 569.5h2M979 568.5h2M981 567.5h2M983 566.5h1M984 565.5h1M985 564.5h2M987 563.5h1M988 562.5h1M989 561.5h1M990 560.5h1M991 559.5h2M993 558.5h1M994 557.5h1M995 556.5h2M997 555.5h1M998 554.5h1M999 554.5h1M1000 553.5h2M1002 552.5h2M1004 551.5h2M1006 550.5h1M1007 549.5h1M1008 548.5h1M1009 547.5h1M1010 546.5h1M1011 545.5h1M1012 544.5h1M1013 543.5h1M1014 542.5h1M1015 541.5h1M1016 540.5h1M1017 539.5h2M1019 538.5h1M1020 537.5h1M1021 536.5h1M1022 535.5h1M1023 534.5h2M1025 533.5h1M1026 532.5h1M1027 531.5h2M1029 530.5h1M1030 529.5h1M1031 529.5h1M1032 528.5h3M1035 527.5h2M1037 526.5h2M1039 526.5h4M1043 525.5h4" fill="none" stroke="#FF00FF" stroke-width="1" shape-rendering="crispEdges"/>
<path d="M4 595.5h2M6 594.5h3M9 593.5h2M11 592.5h2M13 592.5h2M15 591.5h4M19 590.5h2M21 590.5h4M25 589.5h4M29 589.5h8M37 589.5h8M45 589.5h4M49 588.5h4M53 588.5h8M61 588.5h8M69 588.5h2M71 589.5h4M75 590.5h2M77 590.5h2M79 591.5h4M83 592.5h2M85 592.5h4M89 593.5h4M93 593.5h1M94 592.5h2M96 591.5h2M98 590.5h2M100 589.5h2M102 589.5h2M104 588.5h4M108 587.5h2M110 587.5h1M111 586.5h2M113 585.5h2M115 584.5h2M117 583.5h1M118 583.5h1M119 582.5h3M122 581.5h2M124 580.5h2M126 580.5h4M130 579.5h4M134 579.5h4M138 578.5h4M142 578.5h2M144 577.5h4M148 576.5h2M150 576.5h4M154 575.5h4M158 575.5h8M166 575.5h2M168 574.5h4M172 573.5h2M174 573.5h8M182 572.5h2M184 571.5h1M185 570.5h1M186 569.5h2M188 568.5h1M189 567.5h1M190 566.5h1M191 565.5h2M193 564.5h1M194 563.5h1M195 562.5h2M197 561.5h1M198 560.5h1M199 559.5h1M200 558.5h1M201 557.5h2M203 556.5h1M204 555.5h1M205 554.5h1M206 553.5h1M207.5 552v1M208.5 551v1M209.5 550v1M210.5 548v2M211.5 547v1M212.5 546v1M213.5 545v1M214.5 544v1M215 543.5h1M216 542.5h1M217 541.5h2M219 540.5h1M220 539.5h1M221 538.5h1M222 537.5h1M223 536.5h2M225 535.5h1M226 534.5h1M227 533.5h2M229 532.5h1M230 531.5h1M231 531.5h1M232 530.5h3M235 529.5h2M237 528.5h2M239 528.5h1M240 527.5h2M242 526.5h2M244 525.5h2M246 524.5h1M247 525.5h2M249 526.5h2M251 527.5h1M252 528.5h2M254 529.5h1M255 530.5h2M257 531.5h2M259 532.5h1M260 533.5h2M262 534.5h1M263 535.5h2M265 536.5h2M267 537.5h1M268 538.5h2M270 539.5h1M271 540.5h2M273 541.5h2M275 542.5h1M276 543.5h2M278 544.5h1M279 545.5h2M281 546.5h2M283 547.5h1M284 548.5h2M286 549.5h1M287 550.5h2M289 551.5h1M290 552.5h2M292 553.5h1M293 554.5h2M295 555.5h1M296 555.5h1M297 556.5h2M299 557.5h2M301 558.5h2M303 559.5h1M304 559.5h1M305 560.5h2M307 561.5h2M309 562.5h2M311 563.5h1M312 564.5h2M314 565.5h2M316 566.5h1M317 567.5h2M319 568.5h1M320 568.5h1M321 569.5h2M323 570.5h2M325 571.5h2M327 572.5h1M328 572.5h2M330 573.5h4M334 574.5h2M336 574.5h2M338 575.5h4M342 576.5h2M344 576.5h2M346 577.5h4M350 578.5h2M352 578.5h4M356 577.5h4M360 577.5h4M364 578.5h4M368 578.5h2M370 577.5h4M374 576.5h2M376 576.5h2M378 575.5h4M382 574.5h2M384 574.5h2M386 573.5h4M390 572.5h2M392 572.5h1M393 571.5h2M395 570.5h2M397 569.5h2M399 568.5h2M401 568.5h1M402 567.5h2M404 566.5h2M406 565.5h2M408 564.5h1M409 564.5h1M410 563.5h2M412 562.5h2M414 561.5h2M416 560.5h1M417 560.5h1M418 559.5h2M420 558.5h2M422 557.5h2M424 556.5h1M425 555.5h2M427 554.5h1M428 553.5h1M429 552.5h2M431 551.5h1M432 550.5h1M433 549.5h2M435 548.5h1M436 547.5h1M437 546.5h2M439 545.5h1M440 544.5h1M441 544.5h1M442 543.5h3M445 542.5h2M447 541.5h2M449 540.5h1M450 539.5h1M451 538.5h1M452 537.5h1M453 536.5h1M454 535.5h1M455 534.5h1M456 533.5h1M457 532.5h2M459 531.5h1M460 530.5h1M461 529.5h2M463 528.5h1M464 527.5h1M465 526.5h2M467 525.5h1M468 524.5h1M469 523.5h2M471 522.5h1M472 521.5h1M473 521.5h2M475 522.5h4M479 523.5h2M481 523.5h1M482 524.5h2M484 525.5h2M486 526.5h2M488 527.5h1M489 527.5h2M491 528.5h4M495 529.5h3M498 530.5h2M500 531.5h2M502 532.5h1M503 533.5h2M505 534.5h1M506 534.5h2M508 535.5h4M512 536.5h2M514.5 537v2M515.5 539v2M516.5 541v1M517.5 542v2M518.5 544v1M519.5 545v2M520.5 547v2M521.5 549v1M522.5 550v2M523.5 552v1M524.5 553v1M525.5 554v2M526.5 556v1M527.5 557v1M528.5 558v2M529.5 560v1M530 561.5h1M531 562.5h1M532 563.5h1M533 564.5h1M534 565.5h1M535 566.5h1M536 567.5h1M537 568.5h1M538 568.5h8M546 568.5h4M550 567.5h4M554 567.5h8M562 567.5h8M570 567.5h4M574 568.5h4M578 567.5h1M579 566.5h1M580 565.5h1M581 564.5h1M582 563.5h1M583 562.5h1M584 561.5h1M585 560.5h1M586 559.5h1M587 558.5h1M588 557.5h1M589 556.5h2M591 555.5h1M592 554.5h1M593 553.5h1M594 552.5h1M594.5 551v1M595.5 549v2M596.5 546v3M597.5 544v2M598.5 541v3M599.5 539v2M600.5 536v3M601.5 534v2M602.5 532v2M602.5 531v1M603.5 529v2M604.5 527v2M605.5 524v3M606.5 522v2M607.5 519v3M608.5 517v2M609.5 515v2M610.5 513v2M610.5 512v1M611.5 510v2M612.5 507v3M613.5 505v2M614.5 502v3M615.5 500v2M616.5 497v3M617.5 495v2M618.5 493v2M618.5 492v1M619.5 490v2M620.5 488v2M621.5 486v2M622.5 484v2M623.5 482v2M624.5 480v2M625.5 478v2M626.5 477v1M627.5 476v1M628.5 474v2M629.5 473v1M630.5 472v1M631.5 471v1M632.5 469v2M633.5 468v1M634.5 467v1M635 466.5h1M636 465.5h1M637 464.5h2M639 463.5h1M640 462.5h1M641 461.5h1M642 460.5h1M643 460.5h2M645 459.5h4M649 458.5h2M651 458.5h4M655 457.5h4M659 458.5h1M660 459.5h1M661 460.5h1M662 461.5h1M663 462.5h1M664 463.5h1M665 464.5h1M666 465.5h1M667.5 466v2M668.5 468v2M669.5 470v2M670.5 472v1M671.5 473v2M672.5 475v2M673.5 477v2M674.5 479v1M675.5 480v1M676.5 481v1M677.5 482v1M678.5 483v2M679.5 485v1M680.5 486v1M681.5 487v1M682.5 488v1M683.5 489v1M684.5 490v2M685.5 492v1M686.5 493v1M687.5 494v1M688.5 495v1M689.5 496v2M690.5 498v1M691.5 499v1M692 499.5h1M693 500.5h3M696 501.5h2M698 502.5h2M700 502.5h4M704 501.5h4M708 501.5h1M709 500.5h3M712 499.5h2M714 498.5h2M716 498.5h1M717 497.5h3M720 496.5h2M722 495.5h2M724 495.5h2M726 494.5h4M730 493.5h2M732 493.5h8M740 493.5h4M744 494.5h4M748 494.5h1M749 495.5h3M752 496.5h2M754 497.5h2M756 498.5h2M758 499.5h2M760 500.5h1M761 501.5h2M763 502.5h1M764 503.5h2M766 504.5h2M768 505.5h1M769 506.5h2M771 507.5h1M772 508.5h2M774 509.5h2M776 510.5h1M777 511.5h2M779 512.5h1M780 512.5h1M781 513.5h2M783 514.5h2M785 515.5h2M787 516.5h2M789 517.5h2M791 518.5h1M792 519.5h1M793 520.5h2M795 521.5h1M796 522.5h1M797.5 523v1M798.5 524v2M799.5 526v1M800.5 527v1M801.5 528v1M802.5 529v2M803.5 531v1M804.5 532v1M805.5 533v2M806.5 535v1M807.5 536v2M808.5 538v1M809.5 539v2M810.5 541v1M811.5 542v2M812.5 544v1M813.5 545v1M814.5 546v1M815.5 547v1M816.5 548v2M817.5 550v1M818.5 551v1M819.5 552v1M820.5 553v1M821 554.5h1M822 555.5h1M823 556.5h2M825 557.5h1M826 558.5h1M827 559.5h1M828 560.5h1M829 561.5h1M830 562.5h1M831 563.5h2M833 564.5h1M834 565.5h1M835 566.5h1M836 567.5h1M837 568.5h2M839 569.5h1M840 570.5h1M841 571.5h2M843 572.5h1M844 573.5h1M845 574.5h2M847 575.5h2M849 576.5h1M850 577.5h2M852 578.5h1M853 578.5h1M854 579.5h2M856 580.5h2M858 581.5h2M860 582.5h1M861 582.5h1M862 583.5h3M865 584.5h2M867 585.5h2M869 585.5h1M870 586.5h3M873 587.5h2M875 588.5h2M877 588.5h4M881 589.5h5M886 589.5h1M887 590.5h3M890 591.5h2M892 592.5h2M894 592.5h1M895 593.5h3M898 594.5h2M900 595.5h2M902 595.5h4M906 596.5h4M910 596.5h4M914 597.5h4M918 597.5h8M926 597.5h8M934 597.5h1M935 596.5h3M938 595.5h2M940 594.5h2M942 593.5h2M944 592.5h2M946 591.5h1M947 590.5h2M949 589.5h1M950 589.5h1M951 588.5h2M953 587.5h2M955 586.5h2M957 585.5h1M958 584.5h2M960 583.5h2M962 582.5h1M963 581.5h2M965 580.5h1M966 580.5h1M967 579.5h2M969 578.5h2M971 577.5h2M973 576.5h1M974 575.5h2M976 574.5h2M978 573.5h2M980 572.5h2M982 571.5h1M983 570.5h1M984 569.5h1M985 568.5h2M987 567.5h1M988 566.5h1M989 565.5h1M990 564.5h1M991 563.5h2M993 562.5h1M994 561.5h1M995 560.5h2M997 559.5h1M998 558.5h1M999 558.5h1M1000 557.5h2M1002 556.5h2M1004 555.5h2M1006 554.5h1M1007 553.5h1M1008 552.5h1M1009 551.5h2M1011 550.5h1M1012 549.5h1M1013 548.5h1M1014 547.5h1M1015 546.5h2M1017 545.5h1M1018 544.5h1M1019 543.5h2M1021 542.5h1M1022 541.5h1M1023 540.5h2M1025 539.5h1M1026 538.5h1M1027 537.5h2M1029 536.5h1M1030 535.5h1M1031 534.5h2M1033 533.5h2M1035 532.5h1M1036 531.5h2M1038 530.5h1M1039 530.5h2M1041 529.5h4M1045 528.5h2" fill="none" stroke="#00FF00" stroke-width="1" shape-rendering="crispEdges"/>
<path d="M4 598.5h9M13 598.5h8M21 598.5h8M28.5 594v4M29.5 586v8M30.5 578v8M31.5 570v8M32.5 561v9M33.5 553v8M34.5 545v8M35.5 537v8M36.5 532v5M37 532.5h8M44.5 533v4M45.5 537v8M46.5 545v8M47.5 553v8M48.5 561v9M49.5 570v8M50.5 578v8M51.5 586v8M52.5 594v5M53 598.5h8M61 598.5h8M69 598.5h8M76.5 594v4M77.5 586v8M78.5 578v8M79.5 570v8M80.5 561v9M81.5 553v8M82.5 545v8M83.5 537v8M84.5 532v5M85 532.5h8M92.5 533v3M93.5 536v8M94.5 544v7M95.5 551v7M96.5 558v8M97.5 566v7M98.5 573v7M99.5 580v8M100.5 588v7M101.5 595v4M102 598.5h8M110 598.5h8M118 598.5h8M126 598.5h8M134 598.5h8M142 598.5h8M150 598.5h8M158 598.5h8M166 598.5h8M174 598.5h8M182 598.5h8M190 598.5h9M199 598.5h8M207 598.5h8M215 598.5h8M223 598.5h8M231 598.5h8M239 598.5h8M247 598.5h8M255 598.5h8M263 598.5h8M271 598.5h8M279 598.5h8M287 598.5h9M296 598.5h8M304 598.5h8M312 598.5h8M320 598.5h8M328 598.5h8M336 598.5h8M344 598.5h8M352 598.5h8M360 598.5h8M368 598.5h8M376 598.5h8M384 598.5h8M392 598.5h9M401 598.5h8M409 598.5h8M417 598.5h8M425 598.5h8M433 598.5h8M441 598.5h8M449 598.5h8M457 598.5h8M465 598.5h8M473 598.5h8M481 598.5h8M489 598.5h9M498 598.5h8M506 598.5h8M514 598.5h8M522 598.5h8M530 598.5h8M538 598.5h8M546 598.5h8M554 598.5h8M562 598.5h8M570 598.5h8M578 598.5h8M586 598.5h9M595 598.5h8M603 598.5h8M611 598.5h8M619 598.5h8M627 598.5h8M635 598.5h8M643 598.5h8M651 598.5h8M659 598.5h8M667 598.5h8M675 598.5h8M683 598.5h9M692 598.5h8M700 598.5h8M708 598.5h8M716 598.5h8M724 598.5h8M732 598.5h8M740 598.5h8M748 598.5h8M756 598.5h8M764 598.5h8M772 598.5h8M780 598.5h9M789 598.5h8M797 598.5h8M805 598.5h8M813 598.5h8M821 598.5h8M829 598.5h8M837 598.5h8M845 598.5h8M853 598.5h8M861 598.5h8M868.5 594v4M869.5 586v8M870.5 578v8M871.5 570v8M872.5 561v9M873.5 553v8M874.5 545v8M875.5 537v8M876.5 532v5M877 532.5h9M886 532.5h8M893.5 533v4M894.5 537v8M895.5 545v8M896.5 553v8M897.5 561v9M898.5 570v8M899.5 578v8M900.5 586v8M901.5 594v5M901.5 594v4M902.5 586v8M903.5 578v8M904.5 570v8M905.5 561v9M906.5 553v8M907.5 545v8M908.5 537v8M909.5 532v5M910 532.5h8M917.5 533v4M918.5 537v8M919.5 545v8M920.5 553v8M921.5 561v9M922.5 570v8M923.5 578v8M924.5 586v8M925.5 594v5M926 598.5h8M934 598.5h8M942 598.5h8M950 598.5h8M958 598.5h8M966 598.5h8M974 598.5h9M983 598.5h8M991 598.5h8M999 598.5h8M1007 598.5h8M1015 598.5h8M1023 598.5h8M1031 598.5h8M1039 598.5h8" fill="none" stroke="#FF0000" stroke-width="1" shape-rendering="crispEdges"/>
<path d="M4 598.5h9M13 598.5h8M21 598.5h8M28.5 592v6M29.5 580v12M30.5 568v12M31.5 555v13M32.5 543v12M33.5 530v13M34.5 518v12M35.5 506v12M36.5 499v7M37 499.5h8M44.5 500v6M45.5 506v12M46.5 518v12M47.5 530v13M48.5 543v12M49.5 555v13M50.5 568v12M51.5 580v12M52.5 592v7M53 598.5h8M61 598.5h8M69 598.5h8M76.5 592v6M77.5 580v12M78.5 568v12M79.5 555v13M80.5 543v12M81.5 530v13M82.5 518v12M83.5 506v12M84.5 499v7M85 499.5h8M92.5 500v5M93.5 505v11M94.5 516v11M95.5 527v11M96.5 538v11M97.5 549v11M98.5 560v11M99.5 571v11M100.5 582v11M101.5 593v6M102 598.5h8M110 598.5h8M118 598.5h8M126 598.5h8M134 598.5h8M142 598.5h8M150 598.5h8M158 598.5h8M166 598.5h8M174 598.5h8M182 598.5h8M190 598.5h9M199 598.5h8M207 598.5h8M215 598.5h8M223 598.5h8M231 598.5h8M239 598.5h8M247 598.5h8M255 598.5h8M263 598.5h8M271 598.5h8M279 598.5h8M287 598.5h9M296 598.5h8M304 598.5h8M312 598.5h8M320 598.5h8M328 598.5h8M336 598.5h8M344 598.5h8M352 598.5h8M360 598.5h8M368 598.5h8M376 598.5h8M384 598.5h8M392 598.5h9M401 598.5h8M409 598.5h8M417 598.5h8M425 598.5h8M433 598.5h8M441 598.5h8M449 598.5h8M457 598.5h8M465 598.5h8M473 598.5h8M481 598.5h8M489 598.5h9M498 598.5h8M506 598.5h8M514 598.5h8M522 598.5h8M530 598.5h8M538 598.5h8M546 598.5h8M554 598.5h8M562 598.5h8M570 598.5h8M578 598.5h8M586 598.5h9M595 598.5h8M603 598.5h8M611 598.5h8M619 598.5h8M627 598.5h8M635 598.5h8M643 598.5h8M651 598.5h8M659 598.5h8M667 598.5h8M675 598.5h8M683 598.5h9M692 598.5h8M700 598.5h8M708 598.5h8M716 598.5h8M724 598.5h8M732 598.5h8M740 598.5h8M748 598.5h8M756 598.5h8M764 598.5h8M772 598.5h8M780 598.5h9M789 598.5h8M797 598.5h8M805 598.5h8M813 598.5h8M821 598.5h8M829 598.5h8M837 598.5h8M845 598.5h8M853 598.5h8M861 598.5h8M869 598.5h8M876.5 593v5M877.5 582v11M878.5 571v11M879.5 560v11M880.5 549v11M881.5 538v11M882.5 527v11M883.5 516v11M884.5 505v11M885.5 499v6M886 499.5h8M893.5 500v6M894.5 506v12M895.5 518v12M896.5 530v13M897.5 543v12M898.5 555v13M899.5 568v12M900.5 580v12M901.5 592v7M901.5 592v6M902.5 580v12M903.5 568v12M904.5 555v13M905.5 543v12M906.5 530v13M907.5 518v12M908.5 506v12M909.5 499v7M910 499.5h8M917.5 500v6M918.5 506v12M919.5 518v12M920.5 530v13M921.5 543v12M922.5 555v13M923.5 568v12M924.5 580v12M925.5 592v7M926 598.5h8M934 598.5h8M942 598.5h8M950 598.5h8M958 598.5h8M966 598.5h8M974 598.5h9M983 598.5h8M991 598.5h8M999 598.5h8M1007 598.5h8M1015 598.5h8M1023 598.5h8M1031 598.5h8M1039 598.5h8" fill="none" stroke="#FFFF00" stroke-width="1" shape-rendering="crispEdges"/>
<polyline points="4.5,599 12.5,599 20.5,599 28.5,599 36.5,599 44.5,599 52.5,599 60.5,599 68.5,599 76.5,599 84.5,599 92.5,599 101.5,599 109.5,599 117.5,599 125.5,599 133.5,599 141.5,599 149.5,599 157.5,599 165.5,599 173.5,599 181.5,599 189.5,488 198.5,599 206.5,599 214.5,599 222.5,599 230.5,599 238.5,599 246.5,599 254.5,599 262.5,599 270.5,599 278.5,599 286.5,599 295.5,599 303.5,599 311.5,599 319.5,599 327.5,599 335.5,599 343.5,599 351.5,599 359.5,599 367.5,599 375.5,599 383.5,599 391.5,599 400.5,599 408.5,599 416.5,599 424.5,599 432.5,599 440.5,488 448.5,599 456.5,599 464.5,599 472.5,599 480.5,599 488.5,599 497.5,599 505.5,599 513.5,599 521.5,599 529.5,599 537.5,599 545.5,599 553.5,599 561.5,599 569.5,599 577.5,599 585.5,488 594.5,599 602.5,488 610.5,599 618.5,488 626.5,599 634.5,599 642.5,599 650.5,599 658.5,599 666.5,599 674.5,599 682.5,599 691.5,599 699.5,599 707.5,599 715.5,599 723.5,599 731.5,599 739.5,599 747.5,599 755.5,599 763.5,599 771.5,599 779.5,599 788.5,599 796.5,599 804.5,599 812.5,599 820.5,599 828.5,599 836.5,599 844.5,599 852.5,599 860.5,599 868.5,599 876.5,599 885.5,599 893.5,599 901.5,599 909.5,599 917.5,599 925.5,599 933.5,599 941.5,599 949.5,599 957.5,599 965.5,599 973.5,599 982.5,599 990.5,488 998.5,599 1006.5,599 1014.5,599 1022.5,599 1030.5,599 1038.5,599 1046.5,599" fill="none" stroke="#FF00FF" stroke-width="2" stroke-linejoin="miter" shape-rendering="crispEdges"/>
<g font-family='"Liberation Sans","WenQuanYi Zen Hei","Noto Sans CJK SC",sans-serif' font-size="12">
<path d="M626.5 42.5 L637.5 45.5 M626.5 42.5 l3 -1.5 M626.5 42.5 l2 2.5" stroke="#C0C0C0" fill="none" stroke-width="1"/>
<text x="641" y="50" fill="#C0C0C0" font-size="12" >4.23</text>
<path d="M538.5 366.5 L549.5 366.5 M538.5 366.5 l3 -2 M538.5 366.5 l3 2" stroke="#C0C0C0" fill="none" stroke-width="1"/>
<text x="551" y="372" fill="#C0C0C0" font-size="12" >3.03</text>
<rect x="616" y="371" width="12" height="13" fill="#A05000" />
<rect x="625" y="374" width="2" height="1" fill="#FFFFFF" />
<rect x="625" y="377" width="2" height="1" fill="#FFFFFF" />
<rect x="624" y="380" width="3" height="1" fill="#FFFFFF" />
<rect x="603" y="371" width="12" height="13" fill="#800000" />
<text x="602.5" y="381.5" fill="#FFFFFF" font-size="11" >别</text>
<rect x="611.5" y="371" width="12.5" height="13" fill="#800000" />
<text x="612.3" y="381.5" fill="#FFFFFF" font-size="11" >增</text>
<rect x="651" y="371" width="13" height="13" fill="#004080" />
<text x="651.5" y="382" fill="#FFFFFF" font-size="12" >财</text>
<text x="960.5" y="384" fill="#FF0000" font-size="10.5" font-weight="bold">S</text>
<path d="M961 375.5 l3 -3 l3 3z" fill="#FF0000"/>
<text x="28" y="13.3" fill="#C0C0C0" font-size="12" >分时</text>
<text x="61" y="13.3" fill="#C0C0C0" font-size="12" >1分钟</text>
<text x="100" y="13.3" fill="#C0C0C0" font-size="12" >5分钟</text>
<text x="139" y="13.3" fill="#C0C0C0" font-size="12" >15分钟</text>
<text x="185" y="13.3" fill="#C0C0C0" font-size="12" >30分钟</text>
<text x="231" y="13.3" fill="#C0C0C0" font-size="12" >60分钟</text>
<text x="311" y="13.3" fill="#C0C0C0" font-size="12" >周线</text>
<text x="345" y="13.3" fill="#C0C0C0" font-size="12" >月线</text>
<text x="378" y="13.3" fill="#C0C0C0" font-size="12" >多周期</text>
<text x="422.5" y="13.3" fill="#C0C0C0" font-size="12" >更多</text>
<text x="278" y="13.3" fill="#54FFFF" font-size="12" >日线</text>
<path d="M450.5 5.5 l4 4 l-4 4" stroke="#C0C0C0" fill="none"/>
<text x="827" y="13.3" fill="#C0C0C0" font-size="12" text-anchor="middle" >复权</text>
<text x="862" y="13.3" fill="#C0C0C0" font-size="12" text-anchor="middle" >叠加</text>
<text x="897" y="13.3" fill="#C0C0C0" font-size="12" text-anchor="middle" >多股</text>
<text x="932" y="13.3" fill="#C0C0C0" font-size="12" text-anchor="middle" >统计</text>
<text x="967" y="13.3" fill="#C0C0C0" font-size="12" text-anchor="middle" >画线</text>
<text x="1002" y="13.3" fill="#C0C0C0" font-size="12" text-anchor="middle" >F10</text>
<text x="1037" y="13.3" fill="#C0C0C0" font-size="12" text-anchor="middle" >标记</text>
<text x="1072" y="13.3" fill="#C0C0C0" font-size="12" text-anchor="middle" >+自选</text>
<text x="1107" y="13.3" fill="#C0C0C0" font-size="12" text-anchor="middle" >返回</text>
<rect x="5.5" y="3.5" width="11" height="10" rx="2" fill="none" stroke="#808080"/>
<rect x="12" y="5" width="3" height="7" fill="#808080" />
<text x="3" y="32.4" fill="#C0C0C0" font-size="12" >华泰股份(日线.前复权)</text>
<circle cx="134.5" cy="29" r="5.5" fill="#808080"/><path d="M131.5 27.5 l3 3 l3 -3" stroke="#000" fill="none" stroke-width="1.3"/>
<path d="M1047.5 24.5 l5 5 l-5 5 l-5 -5z" stroke="#808080" fill="none"/>
<rect x="1060.5" y="24.5" width="11" height="10" rx="2" fill="none" stroke="#808080"/>
<rect x="1067" y="26" width="3" height="7" fill="#808080" />
<text x="1120" y="52.6" fill="#FF3232" font-size="11.5" text-anchor="end" >4.20</text>
<text x="1120" y="79.6" fill="#FF3232" font-size="11.5" text-anchor="end" >4.10</text>
<text x="1120" y="107.6" fill="#FF3232" font-size="11.5" text-anchor="end" >4.00</text>
<text x="1120" y="134.6" fill="#FF3232" font-size="11.5" text-anchor="end" >3.90</text>
<text x="1120" y="161.6" fill="#FF3232" font-size="11.5" text-anchor="end" >3.80</text>
<text x="1120" y="188.6" fill="#FF3232" font-size="11.5" text-anchor="end" >3.70</text>
<text x="1120" y="215.6" fill="#FF3232" font-size="11.5" text-anchor="end" >3.60</text>
<text x="1120" y="243.6" fill="#FF3232" font-size="11.5" text-anchor="end" >3.50</text>
<text x="1120" y="270.6" fill="#FF3232" font-size="11.5" text-anchor="end" >3.40</text>
<text x="1120" y="297.6" fill="#FF3232" font-size="11.5" text-anchor="end" >3.30</text>
<text x="1120" y="324.6" fill="#FF3232" font-size="11.5" text-anchor="end" >3.20</text>
<text x="1078" y="351.5" fill="#C0C0C0" font-size="12" >3.07</text>
<text x="1120" y="408.6" fill="#FF3232" font-size="11.5" text-anchor="end" >350.0</text>
<text x="1120" y="436.6" fill="#FF3232" font-size="11.5" text-anchor="end" >300.0</text>
<text x="1120" y="464.6" fill="#FF3232" font-size="11.5" text-anchor="end" >250.0</text>
<text x="1120" y="492.6" fill="#FF3232" font-size="11.5" text-anchor="end" >200.0</text>
<text x="1120" y="519.6" fill="#FF3232" font-size="11.5" text-anchor="end" >150.0</text>
<text x="1120" y="547.6" fill="#FF3232" font-size="11.5" text-anchor="end" >100.0</text>
<text x="1120" y="575.6" fill="#FF3232" font-size="11.5" text-anchor="end" >50.00</text>
<text x="1120" y="603.6" fill="#FF3232" font-size="11.5" text-anchor="end" >0.00</text>
<circle cx="8" cy="394" r="5.5" fill="#808080"/><path d="M5 392.5 l3 3 l3 -3" stroke="#000" fill="none" stroke-width="1.3"/>
<text x="18" y="397.6" fill="#C0C0C0" font-size="12" >股朋指标网</text>
<text x="82.5" y="397.6" fill="#FFFFFF" font-size="12" >底: 199.21</text>
<text x="143" y="397.6" fill="#808080" font-size="12" >底5: 224.03</text>
<text x="212.5" y="397.6" fill="#FFFF00" font-size="12" >G3: 139.34</text>
<text x="277" y="397.6" fill="#FF00FF" font-size="12" >G6: 133.49</text>
<text x="342.5" y="397.6" fill="#00FF00" font-size="12" >G8: 126.93</text>
<text x="406.5" y="397.6" fill="#FF0000" font-size="12" >买: 0.00</text>
<text x="454" y="397.6" fill="#FFFF00" font-size="12" >博: 0.00</text>
<text x="502" y="397.6" fill="#FFFF00" font-size="12" >: 200.00</text>
<text x="550" y="397.6" fill="#FF00FF" font-size="12" >倍量: 0.00</text>
<text x="4" y="643" fill="#FF3232" font-size="12" >2024年</text>
<text x="183" y="643" fill="#FF3232" font-size="12" >2</text>
<text x="329" y="643" fill="#FF3232" font-size="12" >3</text>
<text x="669" y="643" fill="#FF3232" font-size="12" >5</text>
<text x="822" y="643" fill="#FF3232" font-size="12" >6</text>
<rect x="493" y="632" width="78" height="13" fill="#000080" />
<rect x="492.5" y="631.5" width="78" height="14" fill="none" stroke="#808080" stroke-width="1"/>
<text x="495" y="643" fill="#FFFFFF" font-size="12" >2025/04/01/二</text>
</g>
<rect x="971" y="600" width="159" height="50" fill="#363334" />
<text x="1051" y="622" fill="#FFFFFF" text-anchor="middle" style="font-family:'Liberation Sans','Noto Sans CJK SC',sans-serif;font-weight:bold;font-size:18px">指标公式网</text>
<text x="1053" y="641" fill="#FFFFFF" text-anchor="middle" style="font-family:'Liberation Sans','DejaVu Sans',sans-serif;font-size:16.4px">www.zbgs3.com</text>
</svg>
</body></html>
